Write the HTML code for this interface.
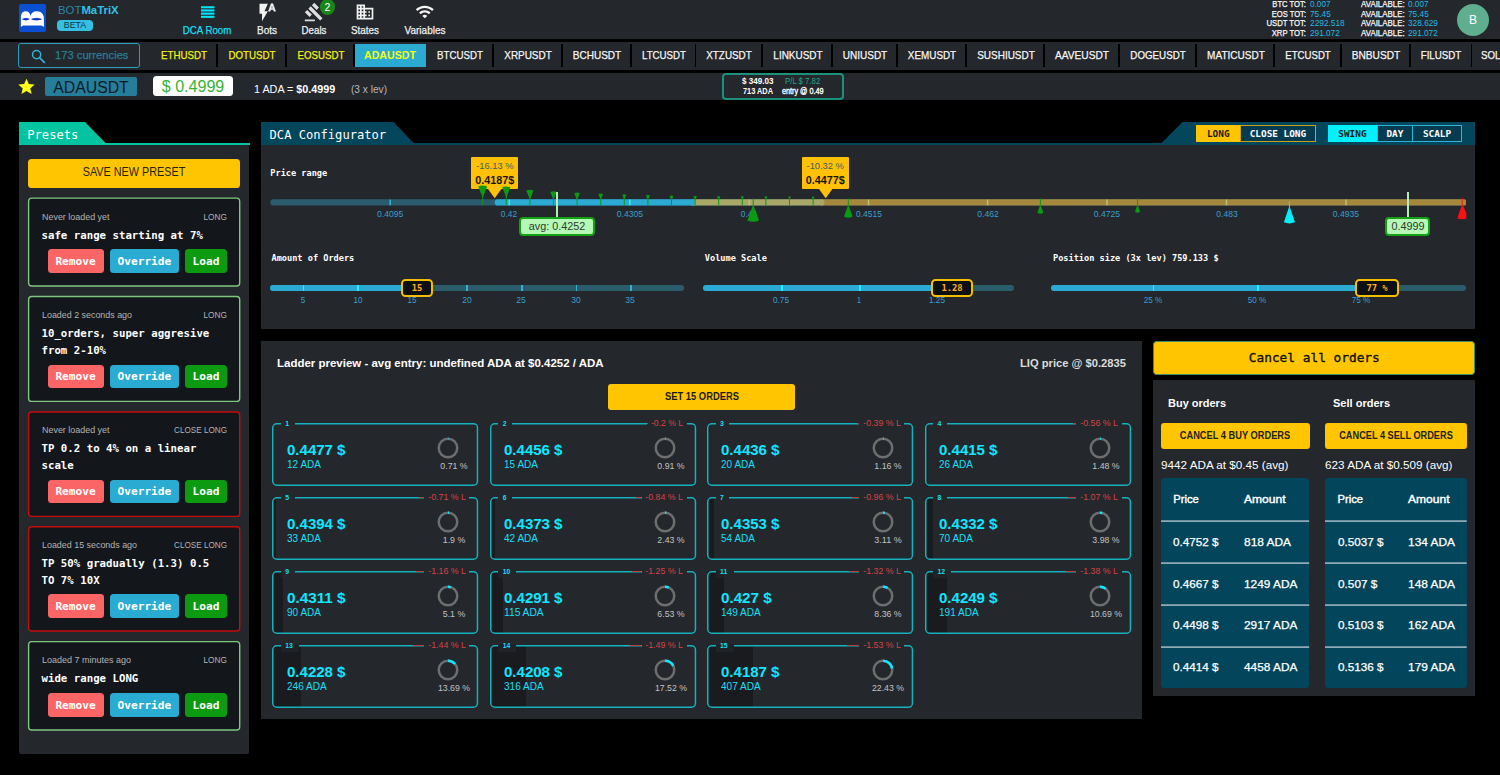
<!DOCTYPE html>
<html lang="en"><head><meta charset="utf-8"><title>BOTMaTriX - DCA Room</title>
<style>
html,body{margin:0;padding:0;background:#000;}
body{width:1500px;height:775px;overflow:hidden;position:relative;font-family:'Liberation Sans', sans-serif;}
.sec{position:absolute;left:0;top:0;width:0;height:0;}
.sec div,.a{position:absolute;}
.t{position:absolute;white-space:nowrap;display:block;}
svg{overflow:visible;}
</style></head>
<body>
<div class="sec" id="header">
<div style="left:0.00px;top:0.00px;width:1500.00px;height:38.80px;background:#24272c;"></div>
<div style="left:18.80px;top:4.10px;width:27.40px;height:27.80px;background:#0b50d0;border-radius:1.8px;"><svg viewBox="0 0 27.4 27.8" width="27.4" height="27.8" style="display:block"><path d="M1.900 23.100V13.200C1.900 9.300 4 7.200 6.700 7.200C9.400 7.200 11 9 11.500 11.800C12.100 9 14.500 7.200 17.800 7.200C22 7.200 24.900 10 24.900 14.200V23.100L22.500 21.500H4.200z" fill="#fff"/><path d="M3.600 15.200Q6.900 13.400 10.200 15.200Q6.900 16.900 3.600 15.200zM12.600 15.200Q17.400 13.300 22.300 15.200Q17.400 17 12.600 15.200z" fill="#0a34c4" stroke="#0a34c4" stroke-width="0.800"/></svg></div>
<span class="t" style="top:3.40px;font:normal 11.4px/14px 'Liberation Sans', sans-serif;color:#fff;left:57.60px;transform-origin:0 50%;transform:scaleX(0.998);"><span style="color:#2a87a3">BOT</span><b style="color:#2fc3e8">MaTriX</b></span>
<div style="left:57.00px;top:19.50px;width:35.50px;height:11.70px;background:#35bfe2;border-radius:4px;"></div>
<span class="t" style="top:19.70px;font:normal 9px/11px 'Liberation Sans', sans-serif;color:#0b3a4a;left:74.70px;margin-left:-150px;width:300px;text-align:center;transform-origin:50% 50%;transform:scaleX(0.985);">BETA</span>
<svg class="a" style="left:200.8px;top:5.8px" width="13.4" height="12.4" viewBox="0 0 13.4 12.4"><rect x="0" y="0.2" width="13.4" height="2.1" fill="#00e5ff"/><rect x="0" y="3.4" width="13.4" height="2.1" fill="#00e5ff"/><rect x="0" y="6.6" width="13.4" height="2.1" fill="#00e5ff"/><rect x="0" y="9.8" width="13.4" height="2.1" fill="#00e5ff"/></svg>
<span class="t" style="top:23.00px;font:normal 11.2px/14px 'Liberation Sans', sans-serif;color:#19dff5;left:207.30px;margin-left:-150px;width:300px;text-align:center;transform-origin:50% 50%;-webkit-text-stroke:0.25px currentColor;transform:scaleX(0.867);">DCA Room</span>
<svg class="a" style="left:257px;top:2px" width="20" height="20" viewBox="0 0 24 24" fill="#f1f1f1"><path d="M3 2v12h3v9l7-12H9l4-9H3z"/><path d="M19 2h-2l-3.200 9h1.900l.7-2h3.200l.7 2h1.900L19 2zm-2.150 5.650L18 4l1.150 3.650h-2.300z" stroke="#f1f1f1" stroke-width="0.700"/></svg>
<span class="t" style="top:23.00px;font:normal 11.2px/14px 'Liberation Sans', sans-serif;color:#f1f1f1;left:266.50px;margin-left:-150px;width:300px;text-align:center;transform-origin:50% 50%;-webkit-text-stroke:0.25px currentColor;transform:scaleX(0.893);">Bots</span>
<svg class="a" style="left:304.3px;top:1.7px" width="20" height="20" viewBox="0 0 24 24" fill="#dedede"><path d="M1 21h12v2H1zM5.245 8.070l2.830-2.827 14.140 14.142-2.828 2.828zM12.317 1l5.657 5.656-2.830 2.830-5.654-5.660zM3.825 9.485l5.657 5.657-2.828 2.828-5.657-5.657z"/></svg>
<div style="left:319.60px;top:-0.80px;width:15.60px;height:15.60px;background:#178717;border-radius:50%;"></div>
<span class="t" style="top:0.50px;font:normal 10.5px/13px 'Liberation Sans', sans-serif;color:#fff;left:327.50px;margin-left:-150px;width:300px;text-align:center;transform-origin:50% 50%;">2</span>
<span class="t" style="top:23.00px;font:normal 11.2px/14px 'Liberation Sans', sans-serif;color:#f1f1f1;left:314.00px;margin-left:-150px;width:300px;text-align:center;transform-origin:50% 50%;-webkit-text-stroke:0.25px currentColor;transform:scaleX(0.867);">Deals</span>
<svg class="a" style="left:355.2px;top:1.7px" width="20" height="20" viewBox="0 0 24 24" fill="#f1f1f1"><path d="M12 7V3H2v18h20V7H12zM6 19H4v-2h2v2zm0-4H4v-2h2v2zm0-4H4V9h2v2zm0-4H4V5h2v2zm4 12H8v-2h2v2zm0-4H8v-2h2v2zm0-4H8V9h2v2zm0-4H8V5h2v2zm10 12h-8v-2h2v-2h-2v-2h2v-2h-2V9h8v10zm-2-8h-2v2h2v-2zm0 4h-2v2h2v-2z"/></svg>
<span class="t" style="top:23.00px;font:normal 11.2px/14px 'Liberation Sans', sans-serif;color:#f1f1f1;left:365.40px;margin-left:-150px;width:300px;text-align:center;transform-origin:50% 50%;-webkit-text-stroke:0.25px currentColor;transform:scaleX(0.883);">States</span>
<svg class="a" style="left:415.2px;top:2.1px" width="19.6" height="19.6" viewBox="0 0 24 24" fill="#f4f4f4"><path d="M1 9l2 2c4.970-4.970 13.030-4.970 18 0l2-2C16.930 2.930 7.080 2.930 1 9zm8 8l3 3 3-3c-1.650-1.660-4.340-1.660-6 0zm-4-4l2 2c2.760-2.760 7.240-2.760 10 0l2-2C15.140 9.140 8.870 9.140 5 13z"/></svg>
<span class="t" style="top:23.00px;font:normal 11.2px/14px 'Liberation Sans', sans-serif;color:#f1f1f1;left:425.00px;margin-left:-150px;width:300px;text-align:center;transform-origin:50% 50%;-webkit-text-stroke:0.25px currentColor;transform:scaleX(0.895);">Variables</span>
<span class="t" style="top:-1.10px;font:normal 8.6px/11px 'Liberation Sans', sans-serif;color:#f8f8f8;left:1006.30px;width:300px;text-align:right;transform-origin:100% 50%;-webkit-text-stroke:0.25px currentColor;transform:scaleX(0.889);">BTC TOT:</span>
<span class="t" style="top:-1.10px;font:normal 8.6px/11px 'Liberation Sans', sans-serif;color:#21b8e6;left:1310.30px;transform-origin:0 50%;transform:scaleX(0.953);">0.007</span>
<span class="t" style="top:-1.10px;font:normal 8.6px/11px 'Liberation Sans', sans-serif;color:#f8f8f8;left:1360.50px;transform-origin:0 50%;-webkit-text-stroke:0.25px currentColor;transform:scaleX(0.921);">AVAILABLE:</span>
<span class="t" style="top:-1.10px;font:normal 8.6px/11px 'Liberation Sans', sans-serif;color:#21b8e6;left:1408.30px;transform-origin:0 50%;transform:scaleX(0.953);">0.007</span>
<span class="t" style="top:8.60px;font:normal 8.6px/11px 'Liberation Sans', sans-serif;color:#f8f8f8;left:1006.30px;width:300px;text-align:right;transform-origin:100% 50%;-webkit-text-stroke:0.25px currentColor;transform:scaleX(0.883);">EOS TOT:</span>
<span class="t" style="top:8.60px;font:normal 8.6px/11px 'Liberation Sans', sans-serif;color:#21b8e6;left:1310.30px;transform-origin:0 50%;transform:scaleX(0.967);">75.45</span>
<span class="t" style="top:8.60px;font:normal 8.6px/11px 'Liberation Sans', sans-serif;color:#f8f8f8;left:1360.50px;transform-origin:0 50%;-webkit-text-stroke:0.25px currentColor;transform:scaleX(0.921);">AVAILABLE:</span>
<span class="t" style="top:8.60px;font:normal 8.6px/11px 'Liberation Sans', sans-serif;color:#21b8e6;left:1408.30px;transform-origin:0 50%;transform:scaleX(0.967);">75.45</span>
<span class="t" style="top:17.85px;font:normal 8.6px/11px 'Liberation Sans', sans-serif;color:#f8f8f8;left:1006.30px;width:300px;text-align:right;transform-origin:100% 50%;-webkit-text-stroke:0.25px currentColor;transform:scaleX(0.901);">USDT TOT:</span>
<span class="t" style="top:17.85px;font:normal 8.6px/11px 'Liberation Sans', sans-serif;color:#21b8e6;left:1310.30px;transform-origin:0 50%;transform:scaleX(0.968);">2292.518</span>
<span class="t" style="top:17.85px;font:normal 8.6px/11px 'Liberation Sans', sans-serif;color:#f8f8f8;left:1360.50px;transform-origin:0 50%;-webkit-text-stroke:0.25px currentColor;transform:scaleX(0.921);">AVAILABLE:</span>
<span class="t" style="top:17.85px;font:normal 8.6px/11px 'Liberation Sans', sans-serif;color:#21b8e6;left:1408.30px;transform-origin:0 50%;transform:scaleX(0.965);">328.629</span>
<span class="t" style="top:27.50px;font:normal 8.6px/11px 'Liberation Sans', sans-serif;color:#f8f8f8;left:1006.30px;width:300px;text-align:right;transform-origin:100% 50%;-webkit-text-stroke:0.25px currentColor;transform:scaleX(0.897);">XRP TOT:</span>
<span class="t" style="top:27.50px;font:normal 8.6px/11px 'Liberation Sans', sans-serif;color:#21b8e6;left:1310.30px;transform-origin:0 50%;transform:scaleX(0.956);">291.072</span>
<span class="t" style="top:27.50px;font:normal 8.6px/11px 'Liberation Sans', sans-serif;color:#f8f8f8;left:1360.50px;transform-origin:0 50%;-webkit-text-stroke:0.25px currentColor;transform:scaleX(0.921);">AVAILABLE:</span>
<span class="t" style="top:27.50px;font:normal 8.6px/11px 'Liberation Sans', sans-serif;color:#21b8e6;left:1408.30px;transform-origin:0 50%;transform:scaleX(0.956);">291.072</span>
<div style="left:1457.20px;top:4.20px;width:32.00px;height:32.00px;background:#5fae8f;border-radius:50%;"></div>
<span class="t" style="top:12.30px;font:normal 13px/16px 'Liberation Sans', sans-serif;color:#fff;left:1473.30px;margin-left:-150px;width:300px;text-align:center;transform-origin:50% 50%;transform:scaleX(0.923);">B</span>
</div>
<div class="sec" id="ticker">
<div style="left:0.00px;top:41.80px;width:1500.00px;height:28.40px;background:#24272c;"></div>
<div style="left:18.30px;top:43.20px;width:121.30px;height:24.60px;border:1px solid #2b9cba;border-radius:3px;box-sizing:border-box;"></div>
<svg class="a" style="left:31px;top:48.5px" width="15" height="15" viewBox="0 0 15 15" fill="none" stroke="#2fb4d8" stroke-width="1.500"><circle cx="5.600" cy="5.600" r="4.100"/><path d="M8.600 8.600L13.800 13.800" stroke-width="1.700"/></svg>
<span class="t" style="top:47.90px;font:normal 11.2px/14px 'Liberation Sans', sans-serif;color:#2a7d96;left:55.30px;transform-origin:0 50%;-webkit-text-stroke:0.25px currentColor;transform:scaleX(1.001);">173 currencies</span>
<span class="t" style="top:48.20px;font:normal 11.2px/14px 'Liberation Sans', sans-serif;color:#f5f01e;left:184.00px;margin-left:-150px;width:300px;text-align:center;transform-origin:50% 50%;-webkit-text-stroke:0.25px currentColor;transform:scaleX(0.867);">ETHUSDT</span>
<span class="t" style="top:48.20px;font:normal 11.2px/14px 'Liberation Sans', sans-serif;color:#f5f01e;left:252.00px;margin-left:-150px;width:300px;text-align:center;transform-origin:50% 50%;-webkit-text-stroke:0.25px currentColor;transform:scaleX(0.869);">DOTUSDT</span>
<div style="left:216.10px;top:44.30px;width:1.80px;height:23.00px;background:#000;"></div>
<span class="t" style="top:48.20px;font:normal 11.2px/14px 'Liberation Sans', sans-serif;color:#f5f01e;left:320.65px;margin-left:-150px;width:300px;text-align:center;transform-origin:50% 50%;-webkit-text-stroke:0.25px currentColor;transform:scaleX(0.865);">EOSUSDT</span>
<div style="left:285.10px;top:44.30px;width:1.80px;height:23.00px;background:#000;"></div>
<div style="left:355.00px;top:44.30px;width:70.80px;height:22.80px;background:#2baad2;"></div>
<span class="t" style="top:48.20px;font:bold 11.2px/14px 'Liberation Sans', sans-serif;color:#f2ff1a;left:390.20px;margin-left:-150px;width:300px;text-align:center;transform-origin:50% 50%;transform:scaleX(0.951);">ADAUSDT</span>
<span class="t" style="top:48.20px;font:normal 11.2px/14px 'Liberation Sans', sans-serif;color:#f7f7f7;left:460.00px;margin-left:-150px;width:300px;text-align:center;transform-origin:50% 50%;-webkit-text-stroke:0.25px currentColor;transform:scaleX(0.867);">BTCUSDT</span>
<span class="t" style="top:48.20px;font:normal 11.2px/14px 'Liberation Sans', sans-serif;color:#f7f7f7;left:528.00px;margin-left:-150px;width:300px;text-align:center;transform-origin:50% 50%;-webkit-text-stroke:0.25px currentColor;transform:scaleX(0.888);">XRPUSDT</span>
<div style="left:492.10px;top:44.30px;width:1.80px;height:23.00px;background:#000;"></div>
<span class="t" style="top:48.20px;font:normal 11.2px/14px 'Liberation Sans', sans-serif;color:#f7f7f7;left:597.00px;margin-left:-150px;width:300px;text-align:center;transform-origin:50% 50%;-webkit-text-stroke:0.25px currentColor;transform:scaleX(0.897);">BCHUSDT</span>
<div style="left:561.10px;top:44.30px;width:1.80px;height:23.00px;background:#000;"></div>
<span class="t" style="top:48.20px;font:normal 11.2px/14px 'Liberation Sans', sans-serif;color:#f7f7f7;left:663.75px;margin-left:-150px;width:300px;text-align:center;transform-origin:50% 50%;-webkit-text-stroke:0.25px currentColor;transform:scaleX(0.867);">LTCUSDT</span>
<div style="left:630.10px;top:44.30px;width:1.80px;height:23.00px;background:#000;"></div>
<span class="t" style="top:48.20px;font:normal 11.2px/14px 'Liberation Sans', sans-serif;color:#f7f7f7;left:729.25px;margin-left:-150px;width:300px;text-align:center;transform-origin:50% 50%;-webkit-text-stroke:0.25px currentColor;transform:scaleX(0.882);">XTZUSDT</span>
<div style="left:694.60px;top:44.30px;width:1.80px;height:23.00px;background:#000;"></div>
<span class="t" style="top:48.20px;font:normal 11.2px/14px 'Liberation Sans', sans-serif;color:#f7f7f7;left:797.50px;margin-left:-150px;width:300px;text-align:center;transform-origin:50% 50%;-webkit-text-stroke:0.25px currentColor;transform:scaleX(0.891);">LINKUSDT</span>
<div style="left:761.10px;top:44.30px;width:1.80px;height:23.00px;background:#000;"></div>
<span class="t" style="top:48.20px;font:normal 11.2px/14px 'Liberation Sans', sans-serif;color:#f7f7f7;left:865.00px;margin-left:-150px;width:300px;text-align:center;transform-origin:50% 50%;-webkit-text-stroke:0.25px currentColor;transform:scaleX(0.895);">UNIUSDT</span>
<div style="left:831.10px;top:44.30px;width:1.80px;height:23.00px;background:#000;"></div>
<span class="t" style="top:48.20px;font:normal 11.2px/14px 'Liberation Sans', sans-serif;color:#f7f7f7;left:932.00px;margin-left:-150px;width:300px;text-align:center;transform-origin:50% 50%;-webkit-text-stroke:0.25px currentColor;transform:scaleX(0.883);">XEMUSDT</span>
<div style="left:896.10px;top:44.30px;width:1.80px;height:23.00px;background:#000;"></div>
<span class="t" style="top:48.20px;font:normal 11.2px/14px 'Liberation Sans', sans-serif;color:#f7f7f7;left:1005.60px;margin-left:-150px;width:300px;text-align:center;transform-origin:50% 50%;-webkit-text-stroke:0.25px currentColor;transform:scaleX(0.892);">SUSHIUSDT</span>
<div style="left:965.10px;top:44.30px;width:1.80px;height:23.00px;background:#000;"></div>
<span class="t" style="top:48.20px;font:normal 11.2px/14px 'Liberation Sans', sans-serif;color:#f7f7f7;left:1082.20px;margin-left:-150px;width:300px;text-align:center;transform-origin:50% 50%;-webkit-text-stroke:0.25px currentColor;transform:scaleX(0.908);">AAVEUSDT</span>
<div style="left:1043.30px;top:44.30px;width:1.80px;height:23.00px;background:#000;"></div>
<span class="t" style="top:48.20px;font:normal 11.2px/14px 'Liberation Sans', sans-serif;color:#f7f7f7;left:1158.00px;margin-left:-150px;width:300px;text-align:center;transform-origin:50% 50%;-webkit-text-stroke:0.25px currentColor;transform:scaleX(0.872);">DOGEUSDT</span>
<div style="left:1118.30px;top:44.30px;width:1.80px;height:23.00px;background:#000;"></div>
<span class="t" style="top:48.20px;font:normal 11.2px/14px 'Liberation Sans', sans-serif;color:#f7f7f7;left:1235.50px;margin-left:-150px;width:300px;text-align:center;transform-origin:50% 50%;-webkit-text-stroke:0.25px currentColor;transform:scaleX(0.897);">MATICUSDT</span>
<div style="left:1194.90px;top:44.30px;width:1.80px;height:23.00px;background:#000;"></div>
<span class="t" style="top:48.20px;font:normal 11.2px/14px 'Liberation Sans', sans-serif;color:#f7f7f7;left:1308.10px;margin-left:-150px;width:300px;text-align:center;transform-origin:50% 50%;-webkit-text-stroke:0.25px currentColor;transform:scaleX(0.861);">ETCUSDT</span>
<div style="left:1273.30px;top:44.30px;width:1.80px;height:23.00px;background:#000;"></div>
<span class="t" style="top:48.20px;font:normal 11.2px/14px 'Liberation Sans', sans-serif;color:#f7f7f7;left:1376.00px;margin-left:-150px;width:300px;text-align:center;transform-origin:50% 50%;-webkit-text-stroke:0.25px currentColor;transform:scaleX(0.907);">BNBUSDT</span>
<div style="left:1340.10px;top:44.30px;width:1.80px;height:23.00px;background:#000;"></div>
<span class="t" style="top:48.20px;font:normal 11.2px/14px 'Liberation Sans', sans-serif;color:#f7f7f7;left:1441.25px;margin-left:-150px;width:300px;text-align:center;transform-origin:50% 50%;-webkit-text-stroke:0.25px currentColor;transform:scaleX(0.871);">FILUSDT</span>
<div style="left:1409.10px;top:44.30px;width:1.80px;height:23.00px;background:#000;"></div>
<span class="t" style="top:48.20px;font:normal 11.2px/14px 'Liberation Sans', sans-serif;color:#f7f7f7;left:1481.30px;transform-origin:0 50%;-webkit-text-stroke:0.25px currentColor;transform:scaleX(0.870);">SOLUSDT</span>
<div style="left:1470.60px;top:44.30px;width:1.80px;height:23.00px;background:#000;"></div>
<div style="left:353.40px;top:44.30px;width:1.60px;height:23.00px;background:#000;"></div>
</div>
<div class="sec" id="coinbar">
<div style="left:0.00px;top:73.20px;width:1500.00px;height:26.90px;background:#24272c;"></div>
<svg class="a" style="left:18px;top:77.8px" width="17" height="16.500" viewBox="0 0 24 23"><path d="M12 0.800l3.300 7.600 8.200.7-6.200 5.400 1.900 8L12 18.300 4.800 22.500l1.900-8L.5 9.100l8.200-.7z" fill="#ffff1a"/></svg>
<div style="left:45.20px;top:76.90px;width:91.80px;height:19.30px;background:#267d99;border-radius:2px;"></div>
<span class="t" style="top:77.60px;font:normal 16px/20px 'Liberation Sans', sans-serif;color:#0c1c26;left:91.20px;margin-left:-150px;width:300px;text-align:center;transform-origin:50% 50%;transform:scaleX(0.988);">ADAUSDT</span>
<div style="left:153.00px;top:76.00px;width:80.00px;height:20.40px;background:#fff;border-radius:3.500px;"></div>
<span class="t" style="top:77.40px;font:normal 16px/20px 'Liberation Sans', sans-serif;color:#36b236;left:192.80px;margin-left:-150px;width:300px;text-align:center;transform-origin:50% 50%;transform:scaleX(1.004);">$ 0.4999</span>
<span class="t" style="top:82.20px;font:normal 11.2px/14px 'Liberation Sans', sans-serif;color:#fff;left:254.00px;transform-origin:0 50%;transform:scaleX(0.964);">1 ADA = <b>$0.4999</b></span>
<span class="t" style="top:82.20px;font:normal 11.2px/14px 'Liberation Sans', sans-serif;color:#b9b9b9;left:351.40px;transform-origin:0 50%;transform:scaleX(0.905);">(3 x lev)</span>
<div style="left:722.00px;top:73.30px;width:121.80px;height:26.40px;border:2px solid #1b917b;border-radius:4px;box-sizing:border-box;"></div>
<span class="t" style="top:76.20px;font:bold 8.3px/10px 'Liberation Sans', sans-serif;color:#fff;left:742.20px;transform-origin:0 50%;transform:scaleX(0.975);">$ 349.03</span>
<span class="t" style="top:76.20px;font:normal 8.3px/10px 'Liberation Sans', sans-serif;color:#22a88a;left:784.70px;transform-origin:0 50%;transform:scaleX(0.941);">P/L $ 7.82</span>
<span class="t" style="top:86.30px;font:bold 8.3px/10px 'Liberation Sans', sans-serif;color:#fff;left:743.00px;transform-origin:0 50%;transform:scaleX(0.887);">713 ADA</span>
<span class="t" style="top:86.30px;font:normal 8.3px/10px 'Liberation Sans', sans-serif;color:#fff;left:781.70px;transform-origin:0 50%;-webkit-text-stroke:0.35px #fff;transform:scaleX(0.873);">entry @ 0.49</span>
</div>
<div class="sec" id="presets">
<svg class="a" style="left:18.8px;top:122px" width="92" height="22" viewBox="0 0 92 22"><path d="M0 0H66L87.500 22H0z" fill="#03c3a1"/></svg>
<div style="left:18.80px;top:143.20px;width:230.80px;height:2.20px;background:#03c3a1;"></div>
<div style="left:18.80px;top:145.30px;width:230.60px;height:608.60px;background:#24272c;border-radius:0 0 2px 2px;"></div>
<span class="t" style="top:127.50px;font:normal 12.1px/15px 'DejaVu Sans Mono', 'Liberation Mono', monospace;color:#fff;left:27.30px;transform-origin:0 50%;">Presets</span>
<div style="left:28.00px;top:159.20px;width:212.30px;height:29.00px;background:#ffc600;border-radius:3.5px;"></div>
<span class="t" style="top:165.30px;font:normal 12.2px/15px 'Liberation Sans', sans-serif;color:#2a2208;left:134.00px;margin-left:-150px;width:300px;text-align:center;transform-origin:50% 50%;transform:scaleX(0.887);">SAVE NEW PRESET</span>
<svg class="a" style="left:0;top:0" width="260" height="775"><rect x="28.6" y="198.1" width="211.10" height="87.90" rx="3.2" fill="#13161a" stroke="#7fc77f" stroke-width="1.4"/></svg>
<span class="t" style="top:212.10px;font:normal 9px/11px 'Liberation Sans', sans-serif;color:#b4b4b4;left:41.70px;transform-origin:0 50%;transform:scaleX(0.992);">Never loaded yet</span>
<span class="t" style="top:212.10px;font:normal 9px/11px 'Liberation Sans', sans-serif;color:#b4b4b4;left:-73.50px;width:300px;text-align:right;transform-origin:100% 50%;transform:scaleX(0.921);">LONG</span>
<span class="t" style="top:229.10px;font:bold 10.72px/13px 'DejaVu Sans Mono', 'Liberation Mono', monospace;color:#fff;left:41.50px;transform-origin:0 50%;">safe range starting at 7%</span>
<div style="left:47.60px;top:249.10px;width:56.00px;height:23.80px;background:#fb6565;border-radius:3.5px;"></div>
<span class="t" style="top:254.50px;font:bold 11.2px/14px 'DejaVu Sans Mono', 'Liberation Mono', monospace;color:#fff;left:75.60px;margin-left:-150px;width:300px;text-align:center;transform-origin:50% 50%;">Remove</span>
<div style="left:109.80px;top:249.10px;width:69.20px;height:23.80px;background:#2aabd2;border-radius:3.5px;"></div>
<span class="t" style="top:254.50px;font:bold 11.2px/14px 'DejaVu Sans Mono', 'Liberation Mono', monospace;color:#fff;left:144.40px;margin-left:-150px;width:300px;text-align:center;transform-origin:50% 50%;">Override</span>
<div style="left:185.00px;top:249.10px;width:42.00px;height:23.80px;background:#0b9a10;border-radius:3.5px;"></div>
<span class="t" style="top:254.50px;font:bold 11.2px/14px 'DejaVu Sans Mono', 'Liberation Mono', monospace;color:#fff;left:206.00px;margin-left:-150px;width:300px;text-align:center;transform-origin:50% 50%;">Load</span>
<svg class="a" style="left:0;top:0" width="260" height="775"><rect x="28.6" y="296.5" width="211.10" height="104.90" rx="3.2" fill="#13161a" stroke="#7fc77f" stroke-width="1.4"/></svg>
<span class="t" style="top:310.10px;font:normal 9px/11px 'Liberation Sans', sans-serif;color:#b4b4b4;left:41.70px;transform-origin:0 50%;transform:scaleX(0.988);">Loaded 2 seconds ago</span>
<span class="t" style="top:310.10px;font:normal 9px/11px 'Liberation Sans', sans-serif;color:#b4b4b4;left:-73.50px;width:300px;text-align:right;transform-origin:100% 50%;transform:scaleX(0.921);">LONG</span>
<span class="t" style="top:327.10px;font:bold 10.72px/13px 'DejaVu Sans Mono', 'Liberation Mono', monospace;color:#fff;left:41.50px;transform-origin:0 50%;">10_orders, super aggresive</span>
<span class="t" style="top:343.50px;font:bold 10.72px/13px 'DejaVu Sans Mono', 'Liberation Mono', monospace;color:#fff;left:41.50px;transform-origin:0 50%;">from 2-10%</span>
<div style="left:47.60px;top:364.50px;width:56.00px;height:23.80px;background:#fb6565;border-radius:3.5px;"></div>
<span class="t" style="top:369.90px;font:bold 11.2px/14px 'DejaVu Sans Mono', 'Liberation Mono', monospace;color:#fff;left:75.60px;margin-left:-150px;width:300px;text-align:center;transform-origin:50% 50%;">Remove</span>
<div style="left:109.80px;top:364.50px;width:69.20px;height:23.80px;background:#2aabd2;border-radius:3.5px;"></div>
<span class="t" style="top:369.90px;font:bold 11.2px/14px 'DejaVu Sans Mono', 'Liberation Mono', monospace;color:#fff;left:144.40px;margin-left:-150px;width:300px;text-align:center;transform-origin:50% 50%;">Override</span>
<div style="left:185.00px;top:364.50px;width:42.00px;height:23.80px;background:#0b9a10;border-radius:3.5px;"></div>
<span class="t" style="top:369.90px;font:bold 11.2px/14px 'DejaVu Sans Mono', 'Liberation Mono', monospace;color:#fff;left:206.00px;margin-left:-150px;width:300px;text-align:center;transform-origin:50% 50%;">Load</span>
<svg class="a" style="left:0;top:0" width="260" height="775"><rect x="28.6" y="412.0" width="211.10" height="104.40" rx="3.2" fill="#13161a" stroke="#c40d0d" stroke-width="1.4"/></svg>
<span class="t" style="top:425.10px;font:normal 9px/11px 'Liberation Sans', sans-serif;color:#b4b4b4;left:41.70px;transform-origin:0 50%;transform:scaleX(0.992);">Never loaded yet</span>
<span class="t" style="top:425.10px;font:normal 9px/11px 'Liberation Sans', sans-serif;color:#b4b4b4;left:-73.50px;width:300px;text-align:right;transform-origin:100% 50%;transform:scaleX(0.905);">CLOSE LONG</span>
<span class="t" style="top:442.10px;font:bold 10.72px/13px 'DejaVu Sans Mono', 'Liberation Mono', monospace;color:#fff;left:41.50px;transform-origin:0 50%;">TP 0.2 to 4% on a linear</span>
<span class="t" style="top:458.50px;font:bold 10.72px/13px 'DejaVu Sans Mono', 'Liberation Mono', monospace;color:#fff;left:41.50px;transform-origin:0 50%;">scale</span>
<div style="left:47.60px;top:479.50px;width:56.00px;height:23.80px;background:#fb6565;border-radius:3.5px;"></div>
<span class="t" style="top:484.90px;font:bold 11.2px/14px 'DejaVu Sans Mono', 'Liberation Mono', monospace;color:#fff;left:75.60px;margin-left:-150px;width:300px;text-align:center;transform-origin:50% 50%;">Remove</span>
<div style="left:109.80px;top:479.50px;width:69.20px;height:23.80px;background:#2aabd2;border-radius:3.5px;"></div>
<span class="t" style="top:484.90px;font:bold 11.2px/14px 'DejaVu Sans Mono', 'Liberation Mono', monospace;color:#fff;left:144.40px;margin-left:-150px;width:300px;text-align:center;transform-origin:50% 50%;">Override</span>
<div style="left:185.00px;top:479.50px;width:42.00px;height:23.80px;background:#0b9a10;border-radius:3.5px;"></div>
<span class="t" style="top:484.90px;font:bold 11.2px/14px 'DejaVu Sans Mono', 'Liberation Mono', monospace;color:#fff;left:206.00px;margin-left:-150px;width:300px;text-align:center;transform-origin:50% 50%;">Load</span>
<svg class="a" style="left:0;top:0" width="260" height="775"><rect x="28.6" y="526.7" width="211.10" height="104.35" rx="3.2" fill="#13161a" stroke="#c40d0d" stroke-width="1.4"/></svg>
<span class="t" style="top:540.30px;font:normal 9px/11px 'Liberation Sans', sans-serif;color:#b4b4b4;left:41.70px;transform-origin:0 50%;transform:scaleX(0.989);">Loaded 15 seconds ago</span>
<span class="t" style="top:540.30px;font:normal 9px/11px 'Liberation Sans', sans-serif;color:#b4b4b4;left:-73.50px;width:300px;text-align:right;transform-origin:100% 50%;transform:scaleX(0.905);">CLOSE LONG</span>
<span class="t" style="top:557.30px;font:bold 10.72px/13px 'DejaVu Sans Mono', 'Liberation Mono', monospace;color:#fff;left:41.50px;transform-origin:0 50%;">TP 50% gradually (1.3) 0.5</span>
<span class="t" style="top:573.70px;font:bold 10.72px/13px 'DejaVu Sans Mono', 'Liberation Mono', monospace;color:#fff;left:41.50px;transform-origin:0 50%;">TO 7% 10X</span>
<div style="left:47.60px;top:594.15px;width:56.00px;height:23.80px;background:#fb6565;border-radius:3.5px;"></div>
<span class="t" style="top:599.55px;font:bold 11.2px/14px 'DejaVu Sans Mono', 'Liberation Mono', monospace;color:#fff;left:75.60px;margin-left:-150px;width:300px;text-align:center;transform-origin:50% 50%;">Remove</span>
<div style="left:109.80px;top:594.15px;width:69.20px;height:23.80px;background:#2aabd2;border-radius:3.5px;"></div>
<span class="t" style="top:599.55px;font:bold 11.2px/14px 'DejaVu Sans Mono', 'Liberation Mono', monospace;color:#fff;left:144.40px;margin-left:-150px;width:300px;text-align:center;transform-origin:50% 50%;">Override</span>
<div style="left:185.00px;top:594.15px;width:42.00px;height:23.80px;background:#0b9a10;border-radius:3.5px;"></div>
<span class="t" style="top:599.55px;font:bold 11.2px/14px 'DejaVu Sans Mono', 'Liberation Mono', monospace;color:#fff;left:206.00px;margin-left:-150px;width:300px;text-align:center;transform-origin:50% 50%;">Load</span>
<svg class="a" style="left:0;top:0" width="260" height="775"><rect x="28.6" y="641.6" width="211.10" height="88.40" rx="3.2" fill="#13161a" stroke="#7fc77f" stroke-width="1.4"/></svg>
<span class="t" style="top:655.10px;font:normal 9px/11px 'Liberation Sans', sans-serif;color:#b4b4b4;left:41.70px;transform-origin:0 50%;transform:scaleX(0.999);">Loaded 7 minutes ago</span>
<span class="t" style="top:655.10px;font:normal 9px/11px 'Liberation Sans', sans-serif;color:#b4b4b4;left:-73.50px;width:300px;text-align:right;transform-origin:100% 50%;transform:scaleX(0.921);">LONG</span>
<span class="t" style="top:672.10px;font:bold 10.72px/13px 'DejaVu Sans Mono', 'Liberation Mono', monospace;color:#fff;left:41.50px;transform-origin:0 50%;">wide range LONG</span>
<div style="left:47.60px;top:693.10px;width:56.00px;height:23.80px;background:#fb6565;border-radius:3.5px;"></div>
<span class="t" style="top:698.50px;font:bold 11.2px/14px 'DejaVu Sans Mono', 'Liberation Mono', monospace;color:#fff;left:75.60px;margin-left:-150px;width:300px;text-align:center;transform-origin:50% 50%;">Remove</span>
<div style="left:109.80px;top:693.10px;width:69.20px;height:23.80px;background:#2aabd2;border-radius:3.5px;"></div>
<span class="t" style="top:698.50px;font:bold 11.2px/14px 'DejaVu Sans Mono', 'Liberation Mono', monospace;color:#fff;left:144.40px;margin-left:-150px;width:300px;text-align:center;transform-origin:50% 50%;">Override</span>
<div style="left:185.00px;top:693.10px;width:42.00px;height:23.80px;background:#0b9a10;border-radius:3.5px;"></div>
<span class="t" style="top:698.50px;font:bold 11.2px/14px 'DejaVu Sans Mono', 'Liberation Mono', monospace;color:#fff;left:206.00px;margin-left:-150px;width:300px;text-align:center;transform-origin:50% 50%;">Load</span>
</div>
<div class="sec" id="configurator">
<svg class="a" style="left:261.2px;top:122.4px" width="160" height="21.5" viewBox="0 0 160 21.5"><path d="M0 0H132.500L153 21.500H0z" fill="#04465c"/></svg>
<svg class="a" style="left:1160px;top:122.4px" width="315" height="21.5" viewBox="0 0 315 21.5"><path d="M22.500 0H315V21.500H1z" fill="#04465c"/></svg>
<div style="left:261.20px;top:143.20px;width:1213.80px;height:2.00px;background:#04465c;"></div>
<div style="left:261.20px;top:145.10px;width:1213.80px;height:183.60px;background:#24272c;"></div>
<span class="t" style="top:127.60px;font:normal 12.1px/15px 'DejaVu Sans Mono', 'Liberation Mono', monospace;color:#fff;left:269.60px;transform-origin:0 50%;">DCA Configurator</span>
<div style="left:1196.30px;top:125.20px;width:43.90px;height:16.90px;background:#ffc400;"></div><span class="t" style="top:128.20px;font:bold 9.4px/12px 'DejaVu Sans Mono', 'Liberation Mono', monospace;color:#1a1a1a;left:1218.25px;margin-left:-150px;width:300px;text-align:center;transform-origin:50% 50%;">LONG</span>
<div style="left:1240.20px;top:125.20px;width:75.50px;height:16.90px;background:#073c50;border:1px solid #c9a21a;box-sizing:border-box;"></div><span class="t" style="top:128.20px;font:bold 9.4px/12px 'DejaVu Sans Mono', 'Liberation Mono', monospace;color:#fff;left:1277.95px;margin-left:-150px;width:300px;text-align:center;transform-origin:50% 50%;">CLOSE LONG</span>
<div style="left:1327.90px;top:125.20px;width:49.10px;height:16.90px;background:#00f0ff;"></div><span class="t" style="top:128.20px;font:bold 9.4px/12px 'DejaVu Sans Mono', 'Liberation Mono', monospace;color:#1a1a1a;left:1352.45px;margin-left:-150px;width:300px;text-align:center;transform-origin:50% 50%;">SWING</span>
<div style="left:1376.50px;top:125.20px;width:36.70px;height:16.90px;background:#073c50;border:1px solid #2fb4d8;box-sizing:border-box;"></div><span class="t" style="top:128.20px;font:bold 9.4px/12px 'DejaVu Sans Mono', 'Liberation Mono', monospace;color:#fff;left:1394.85px;margin-left:-150px;width:300px;text-align:center;transform-origin:50% 50%;">DAY</span>
<div style="left:1412.20px;top:125.20px;width:49.60px;height:16.90px;background:#073c50;border:1px solid #2fb4d8;box-sizing:border-box;"></div><span class="t" style="top:128.20px;font:bold 9.4px/12px 'DejaVu Sans Mono', 'Liberation Mono', monospace;color:#fff;left:1437.00px;margin-left:-150px;width:300px;text-align:center;transform-origin:50% 50%;">SCALP</span>
<span class="t" style="top:168.30px;font:bold 8.6px/11px 'DejaVu Sans Mono', 'Liberation Mono', monospace;color:#fff;left:270.30px;transform-origin:0 50%;">Price range</span>
<svg class="a" style="left:0;top:0" width="1500" height="260"><rect x="270.3" y="199.3" width="1195.700" height="6.2" rx="3.1" fill="#2b5c6c"/><rect x="820" y="199.3" width="646" height="6.2" rx="1.5" fill="#a6883c"/><rect x="690" y="199.3" width="134.500" height="6.2" rx="3.1" fill="#aaa868"/><path d="M497.800 199.3H694.700V205.5H497.800A3.100 3.100 0 0 1 497.800 199.3z" fill="#2baad2"/></svg>
<svg class="a" style="left:0;top:0" width="1500" height="260"><rect x="389.45" y="199.60" width="1.5" height="5.60" fill="#36b8da"/></svg>
<span class="t" style="top:209.20px;font:normal 8.6px/11px 'Liberation Sans', sans-serif;color:#3a9fd0;left:390.20px;margin-left:-150px;width:300px;text-align:center;transform-origin:50% 50%;transform:scaleX(1.000);">0.4095</span>
<svg class="a" style="left:0;top:0" width="1500" height="260"><rect x="508.55" y="199.60" width="1.5" height="5.60" fill="#38ecff"/></svg>
<span class="t" style="top:209.20px;font:normal 8.6px/11px 'Liberation Sans', sans-serif;color:#3a9fd0;left:509.30px;margin-left:-150px;width:300px;text-align:center;transform-origin:50% 50%;transform:scaleX(0.974);">0.42</span>
<svg class="a" style="left:0;top:0" width="1500" height="260"><rect x="629.15" y="199.60" width="1.5" height="5.60" fill="#38ecff"/></svg>
<span class="t" style="top:209.20px;font:normal 8.6px/11px 'Liberation Sans', sans-serif;color:#3a9fd0;left:629.90px;margin-left:-150px;width:300px;text-align:center;transform-origin:50% 50%;transform:scaleX(1.000);">0.4305</span>
<svg class="a" style="left:0;top:0" width="1500" height="260"><rect x="748.55" y="199.60" width="1.5" height="5.60" fill="#bdbf7c"/></svg>
<span class="t" style="top:209.20px;font:normal 8.6px/11px 'Liberation Sans', sans-serif;color:#3a9fd0;left:749.30px;margin-left:-150px;width:300px;text-align:center;transform-origin:50% 50%;transform:scaleX(0.974);">0.44</span>
<svg class="a" style="left:0;top:0" width="1500" height="260"><rect x="867.75" y="199.60" width="1.5" height="5.60" fill="#bdbf7c"/></svg>
<span class="t" style="top:209.20px;font:normal 8.6px/11px 'Liberation Sans', sans-serif;color:#3a9fd0;left:868.50px;margin-left:-150px;width:300px;text-align:center;transform-origin:50% 50%;transform:scaleX(0.981);">0.4515</span>
<svg class="a" style="left:0;top:0" width="1500" height="260"><rect x="986.85" y="199.60" width="1.5" height="5.60" fill="#bdbf7c"/></svg>
<span class="t" style="top:209.20px;font:normal 8.6px/11px 'Liberation Sans', sans-serif;color:#3a9fd0;left:987.60px;margin-left:-150px;width:300px;text-align:center;transform-origin:50% 50%;transform:scaleX(0.990);">0.462</span>
<svg class="a" style="left:0;top:0" width="1500" height="260"><rect x="1106.25" y="199.60" width="1.5" height="5.60" fill="#bdbf7c"/></svg>
<span class="t" style="top:209.20px;font:normal 8.6px/11px 'Liberation Sans', sans-serif;color:#3a9fd0;left:1107.00px;margin-left:-150px;width:300px;text-align:center;transform-origin:50% 50%;transform:scaleX(1.000);">0.4725</span>
<svg class="a" style="left:0;top:0" width="1500" height="260"><rect x="1225.75" y="199.60" width="1.5" height="5.60" fill="#bdbf7c"/></svg>
<span class="t" style="top:209.20px;font:normal 8.6px/11px 'Liberation Sans', sans-serif;color:#3a9fd0;left:1226.50px;margin-left:-150px;width:300px;text-align:center;transform-origin:50% 50%;transform:scaleX(0.990);">0.483</span>
<svg class="a" style="left:0;top:0" width="1500" height="260"><rect x="1345.25" y="199.60" width="1.5" height="5.60" fill="#bdbf7c"/></svg>
<span class="t" style="top:209.20px;font:normal 8.6px/11px 'Liberation Sans', sans-serif;color:#3a9fd0;left:1346.00px;margin-left:-150px;width:300px;text-align:center;transform-origin:50% 50%;transform:scaleX(1.000);">0.4935</span>
<div style="left:471.20px;top:157.40px;width:47.20px;height:31.60px;background:#ffc107;border-radius:1px;"></div><svg class="a" style="left:488.10px;top:189.3px" width="13.4" height="9.5" viewBox="0 0 13.4 9.5"><path d="M0 0H13.400L6.700 9.200z" fill="#ffc107"/></svg><span class="t" style="top:159.70px;font:normal 9.3px/12px 'Liberation Sans', sans-serif;color:#3f6068;left:494.80px;margin-left:-150px;width:300px;text-align:center;transform-origin:50% 50%;">-16.13 %</span><span class="t" style="top:172.80px;font:bold 10.8px/14px 'Liberation Sans', sans-serif;color:#1c1400;left:494.80px;margin-left:-150px;width:300px;text-align:center;transform-origin:50% 50%;">0.4187$</span>
<div style="left:801.60px;top:157.40px;width:47.20px;height:31.60px;background:#ffc107;border-radius:1px;"></div><svg class="a" style="left:818.50px;top:189.3px" width="13.4" height="9.5" viewBox="0 0 13.4 9.5"><path d="M0 0H13.400L6.700 9.200z" fill="#ffc107"/></svg><span class="t" style="top:159.70px;font:normal 9.3px/12px 'Liberation Sans', sans-serif;color:#3f6068;left:825.20px;margin-left:-150px;width:300px;text-align:center;transform-origin:50% 50%;">-10.32 %</span><span class="t" style="top:172.80px;font:bold 10.8px/14px 'Liberation Sans', sans-serif;color:#1c1400;left:825.20px;margin-left:-150px;width:300px;text-align:center;transform-origin:50% 50%;">0.4477$</span>
<svg class="a" style="left:261px;top:150px" width="1214" height="100" viewBox="261 150 1214 100"><path d="M478.20 186.50Q482.70 184.52 487.20 186.50L482.70 197.75z" fill="#0a9a14"/><rect x="482.20" y="186.50" width="1" height="18.80" fill="#0a9a14"/><path d="M502.23 187.30Q506.30 185.51 510.38 187.30L506.30 197.49z" fill="#0a9a14"/><rect x="505.80" y="187.30" width="1" height="18.00" fill="#0a9a14"/><path d="M526.25 190.50Q529.90 188.89 533.55 190.50L529.90 199.62z" fill="#0a9a14"/><rect x="529.40" y="190.50" width="1" height="14.80" fill="#0a9a14"/><path d="M550.27 192.00Q553.50 190.58 556.73 192.00L553.50 200.06z" fill="#0a9a14"/><rect x="553.00" y="192.00" width="1" height="13.30" fill="#0a9a14"/><path d="M574.30 193.20Q577.10 191.97 579.90 193.20L577.10 200.20z" fill="#0a9a14"/><rect x="576.60" y="193.20" width="1" height="12.10" fill="#0a9a14"/><path d="M598.33 194.00Q600.70 192.96 603.08 194.00L600.70 199.94z" fill="#0a9a14"/><rect x="600.20" y="194.00" width="1" height="11.30" fill="#0a9a14"/><path d="M622.20 194.80Q624.30 193.88 626.40 194.80L624.30 200.05z" fill="#0a9a14"/><rect x="623.80" y="194.80" width="1" height="10.50" fill="#0a9a14"/><path d="M645.90 195.40Q647.90 194.52 649.90 195.40L647.90 200.40z" fill="#0a9a14"/><rect x="647.40" y="195.40" width="1" height="9.90" fill="#0a9a14"/><path d="M669.60 195.90Q671.50 195.06 673.40 195.90L671.50 200.65z" fill="#0a9a14"/><rect x="671.00" y="195.90" width="1" height="9.40" fill="#0a9a14"/><path d="M693.30 196.30Q695.10 195.51 696.90 196.30L695.10 200.80z" fill="#0a9a14"/><rect x="694.60" y="196.30" width="1" height="9.00" fill="#0a9a14"/><path d="M717.00 196.50Q718.70 195.75 720.40 196.50L718.70 200.75z" fill="#0a9a14"/><rect x="718.20" y="196.50" width="1" height="8.80" fill="#0a9a14"/><path d="M740.70 196.60Q742.30 195.90 743.90 196.60L742.30 200.60z" fill="#0a9a14"/><rect x="741.80" y="196.60" width="1" height="8.70" fill="#0a9a14"/><path d="M764.40 196.70Q765.90 196.04 767.40 196.70L765.90 200.45z" fill="#0a9a14"/><rect x="765.40" y="196.70" width="1" height="8.60" fill="#0a9a14"/><path d="M788.10 196.80Q789.50 196.18 790.90 196.80L789.50 200.30z" fill="#0a9a14"/><rect x="789.00" y="196.80" width="1" height="8.50" fill="#0a9a14"/><path d="M811.80 196.90Q813.10 196.33 814.40 196.90L813.10 200.15z" fill="#0a9a14"/><rect x="812.60" y="196.90" width="1" height="8.40" fill="#0a9a14"/><path d="M753.20 204.500L759.05 220.50Q753.20 223.00 747.35 220.50z" fill="#0a9a14"/><rect x="752.70" y="198.500" width="1" height="8" fill="#0a9a14"/><path d="M848.30 204.500L852.55 216.50Q848.30 219.00 844.05 216.50z" fill="#0a9a14"/><rect x="847.80" y="198.500" width="1" height="8" fill="#0a9a14"/><path d="M1040.40 204.500L1043.40 212.50Q1040.40 215.00 1037.40 212.50z" fill="#0a9a14"/><rect x="1039.90" y="198.500" width="1" height="8" fill="#0a9a14"/><path d="M1137.60 204.500L1140.20 211.50Q1137.60 214.00 1135.00 211.50z" fill="#0a9a14"/><rect x="1137.10" y="198.500" width="1" height="8" fill="#0a9a14"/><path d="M1289.400 206L1294.900 222.300Q1289.400 224.600 1283.900 222.300z" fill="#00f0ff"/><rect x="1288.900" y="201.400" width="1" height="6" fill="#00f0ff"/><path d="M1462.200 204L1466.300 213V218.500Q1462 220 1457.300 218.500z" fill="#ff1010"/><rect x="1461.700" y="197.800" width="1" height="8" fill="#ff1010"/></svg>
<div style="left:556.00px;top:192.10px;width:2.00px;height:25.50px;background:#b4eeb4;"></div><div style="left:519.00px;top:217.20px;width:76.00px;height:18.40px;background:#b6f8b6;border:2px solid #14a014;border-radius:4px;box-sizing:border-box;"></div><span class="t" style="top:219.00px;font:normal 10.8px/14px 'Liberation Sans', sans-serif;color:#2c3a2c;left:557.05px;margin-left:-150px;width:300px;text-align:center;transform-origin:50% 50%;">avg: 0.4252</span>
<div style="left:1407.00px;top:192.10px;width:2.00px;height:25.50px;background:#b4eeb4;"></div><div style="left:1385.20px;top:217.20px;width:45.30px;height:18.40px;background:#b6f8b6;border:2px solid #14a014;border-radius:4px;box-sizing:border-box;"></div><span class="t" style="top:219.00px;font:normal 10.8px/14px 'Liberation Sans', sans-serif;color:#2c3a2c;left:1407.90px;margin-left:-150px;width:300px;text-align:center;transform-origin:50% 50%;">0.4999</span>
<span class="t" style="top:253.10px;font:bold 8.6px/11px 'DejaVu Sans Mono', 'Liberation Mono', monospace;color:#fff;left:271.50px;transform-origin:0 50%;">Amount of Orders</span>
<div style="left:270.30px;top:284.80px;width:413.70px;height:6.30px;background:#2b5c6c;border-radius:3.2px;"></div><div style="left:270.30px;top:284.80px;width:146.35px;height:6.30px;background:#2baad2;border-radius:3.2px 0 0 3.2px;"></div><div style="left:302.70px;top:285.10px;width:1.80px;height:5.70px;background:#22eaff;"></div><span class="t" style="top:294.80px;font:normal 8.6px/11px 'Liberation Sans', sans-serif;color:#3a9fd0;left:302.90px;margin-left:-150px;width:300px;text-align:center;transform-origin:50% 50%;transform:scaleX(0.941);">5</span><div style="left:357.30px;top:285.10px;width:1.80px;height:5.70px;background:#22eaff;"></div><span class="t" style="top:294.80px;font:normal 8.6px/11px 'Liberation Sans', sans-serif;color:#3a9fd0;left:357.50px;margin-left:-150px;width:300px;text-align:center;transform-origin:50% 50%;transform:scaleX(0.941);">10</span><div style="left:411.90px;top:285.10px;width:1.80px;height:5.70px;background:#35b0d2;"></div><span class="t" style="top:294.80px;font:normal 8.6px/11px 'Liberation Sans', sans-serif;color:#3a9fd0;left:412.10px;margin-left:-150px;width:300px;text-align:center;transform-origin:50% 50%;transform:scaleX(0.941);">15</span><div style="left:466.40px;top:285.10px;width:1.80px;height:5.70px;background:#35b0d2;"></div><span class="t" style="top:294.80px;font:normal 8.6px/11px 'Liberation Sans', sans-serif;color:#3a9fd0;left:466.60px;margin-left:-150px;width:300px;text-align:center;transform-origin:50% 50%;transform:scaleX(0.993);">20</span><div style="left:521.00px;top:285.10px;width:1.80px;height:5.70px;background:#35b0d2;"></div><span class="t" style="top:294.80px;font:normal 8.6px/11px 'Liberation Sans', sans-serif;color:#3a9fd0;left:521.20px;margin-left:-150px;width:300px;text-align:center;transform-origin:50% 50%;transform:scaleX(0.993);">25</span><div style="left:575.60px;top:285.10px;width:1.80px;height:5.70px;background:#35b0d2;"></div><span class="t" style="top:294.80px;font:normal 8.6px/11px 'Liberation Sans', sans-serif;color:#3a9fd0;left:575.80px;margin-left:-150px;width:300px;text-align:center;transform-origin:50% 50%;transform:scaleX(0.993);">30</span><div style="left:630.20px;top:285.10px;width:1.80px;height:5.70px;background:#35b0d2;"></div><span class="t" style="top:294.80px;font:normal 8.6px/11px 'Liberation Sans', sans-serif;color:#3a9fd0;left:630.40px;margin-left:-150px;width:300px;text-align:center;transform-origin:50% 50%;transform:scaleX(0.993);">35</span><div style="left:400.70px;top:278.80px;width:32.50px;height:18.50px;background:#0c1013;border:2px solid #f5bd00;border-radius:4.5px;box-sizing:border-box;"></div><span class="t" style="top:282.80px;font:bold 8.8px/11px 'DejaVu Sans Mono', 'Liberation Mono', monospace;color:#ffab1f;left:416.95px;margin-left:-150px;width:300px;text-align:center;transform-origin:50% 50%;">15</span>
<span class="t" style="top:253.10px;font:bold 8.6px/11px 'DejaVu Sans Mono', 'Liberation Mono', monospace;color:#fff;left:704.80px;transform-origin:0 50%;">Volume Scale</span>
<div style="left:702.70px;top:284.80px;width:311.50px;height:6.30px;background:#2b5c6c;border-radius:3.2px;"></div><div style="left:702.70px;top:284.80px;width:249.05px;height:6.30px;background:#2baad2;border-radius:3.2px 0 0 3.2px;"></div><div style="left:781.00px;top:285.10px;width:1.80px;height:5.70px;background:#22eaff;"></div><span class="t" style="top:294.80px;font:normal 8.6px/11px 'Liberation Sans', sans-serif;color:#3a9fd0;left:781.20px;margin-left:-150px;width:300px;text-align:center;transform-origin:50% 50%;transform:scaleX(0.956);">0.75</span><div style="left:858.80px;top:285.10px;width:1.80px;height:5.70px;background:#22eaff;"></div><span class="t" style="top:294.80px;font:normal 8.6px/11px 'Liberation Sans', sans-serif;color:#3a9fd0;left:859.00px;margin-left:-150px;width:300px;text-align:center;transform-origin:50% 50%;transform:scaleX(0.837);">1</span><div style="left:936.70px;top:285.10px;width:1.80px;height:5.70px;background:#35b0d2;"></div><span class="t" style="top:294.80px;font:normal 8.6px/11px 'Liberation Sans', sans-serif;color:#3a9fd0;left:936.90px;margin-left:-150px;width:300px;text-align:center;transform-origin:50% 50%;transform:scaleX(0.956);">1.25</span><div style="left:931.30px;top:278.80px;width:41.50px;height:18.50px;background:#0c1013;border:2px solid #f5bd00;border-radius:4.5px;box-sizing:border-box;"></div><span class="t" style="top:282.80px;font:bold 8.8px/11px 'DejaVu Sans Mono', 'Liberation Mono', monospace;color:#ffab1f;left:952.05px;margin-left:-150px;width:300px;text-align:center;transform-origin:50% 50%;">1.28</span>
<span class="t" style="top:253.10px;font:bold 8.6px/11px 'DejaVu Sans Mono', 'Liberation Mono', monospace;color:#fff;left:1053.00px;transform-origin:0 50%;">Position size (3x lev) 759.133 $</span>
<div style="left:1051.40px;top:284.80px;width:414.60px;height:6.30px;background:#2b5c6c;border-radius:3.2px;"></div><div style="left:1051.40px;top:284.80px;width:325.30px;height:6.30px;background:#2baad2;border-radius:3.2px 0 0 3.2px;"></div><div style="left:1152.50px;top:285.10px;width:1.80px;height:5.70px;background:#22eaff;"></div><span class="t" style="top:294.80px;font:normal 8.6px/11px 'Liberation Sans', sans-serif;color:#3a9fd0;left:1152.70px;margin-left:-150px;width:300px;text-align:center;transform-origin:50% 50%;transform:scaleX(0.944);">25 %</span><div style="left:1257.10px;top:285.10px;width:1.80px;height:5.70px;background:#22eaff;"></div><span class="t" style="top:294.80px;font:normal 8.6px/11px 'Liberation Sans', sans-serif;color:#3a9fd0;left:1257.30px;margin-left:-150px;width:300px;text-align:center;transform-origin:50% 50%;transform:scaleX(0.944);">50 %</span><div style="left:1361.20px;top:285.10px;width:1.80px;height:5.70px;background:#35b0d2;"></div><span class="t" style="top:294.80px;font:normal 8.6px/11px 'Liberation Sans', sans-serif;color:#3a9fd0;left:1361.40px;margin-left:-150px;width:300px;text-align:center;transform-origin:50% 50%;transform:scaleX(0.944);">75 %</span><div style="left:1355.40px;top:278.80px;width:43.20px;height:18.50px;background:#0c1013;border:2px solid #f5bd00;border-radius:4.5px;box-sizing:border-box;"></div><span class="t" style="top:282.80px;font:bold 8.8px/11px 'DejaVu Sans Mono', 'Liberation Mono', monospace;color:#ffab1f;left:1377.00px;margin-left:-150px;width:300px;text-align:center;transform-origin:50% 50%;">77 %</span>
</div>
<div class="sec" id="ladder">
<div style="left:261.00px;top:341.00px;width:880.80px;height:377.50px;background:#24272c;"></div>
<span class="t" style="top:356.40px;font:bold 11.6px/14px 'Liberation Sans', sans-serif;color:#fff;left:276.60px;transform-origin:0 50%;transform:scaleX(0.990);">Ladder preview - avg entry: undefined ADA at $0.4252 / ADA</span>
<span class="t" style="top:356.40px;font:bold 11.6px/14px 'Liberation Sans', sans-serif;color:#dcdcdc;left:826.20px;width:300px;text-align:right;transform-origin:100% 50%;transform:scaleX(0.964);">LIQ price @ $0.2835</span>
<div style="left:608.10px;top:383.90px;width:186.80px;height:25.80px;background:#ffc600;border-radius:3px;"></div>
<span class="t" style="top:390.10px;font:bold 10.2px/13px 'Liberation Sans', sans-serif;color:#1a1a1a;left:701.50px;margin-left:-150px;width:300px;text-align:center;transform-origin:50% 50%;transform:scaleX(0.920);">SET 15 ORDERS</span>
<div style="left:272.40px;top:422.70px;width:206.20px;height:63.00px;border-radius:4.5px;overflow:hidden;"><div class="a" style="left:0;top:0;bottom:0;width:1.46px;background:#191b1f"></div></div><svg class="a" style="left:272.40px;top:422.70px" width="206.2" height="63.0"><rect x="0.75" y="0.75" width="204.70" height="61.50" rx="4" fill="none" stroke="#15b2be" stroke-width="1.5"/></svg><div style="left:280.80px;top:422.20px;width:13.80px;height:3.00px;background:#24272c;"></div><span class="t" style="top:419.80px;font:bold 6.8px/8px 'Liberation Sans', sans-serif;color:#19dff5;left:285.30px;transform-origin:0 50%;">1</span><span class="t" style="top:440.60px;font:bold 14px/18px 'Liberation Sans', sans-serif;color:#0fe6ff;left:286.50px;transform-origin:0 50%;transform:scaleX(1.073);">0.4477 $</span><span class="t" style="top:457.40px;font:normal 10.8px/14px 'Liberation Sans', sans-serif;color:#19dff5;left:286.50px;transform-origin:0 50%;transform:scaleX(0.928);">12 ADA</span><svg class="a" style="left:435.70px;top:435.80px" width="24" height="24" viewBox="-12 -12 24 24"><circle r="9.25" fill="none" stroke="#6e6e6e" stroke-width="2.5"/><circle r="9.25" fill="none" stroke="#0fe6ff" stroke-width="2.5" stroke-dasharray="0.41 58.12" transform="rotate(-90)"/></svg><span class="t" style="top:461.40px;font:normal 9px/11px 'Liberation Sans', sans-serif;color:#c2c2c2;left:453.60px;margin-left:-150px;width:300px;text-align:center;transform-origin:50% 50%;transform:scaleX(0.974);">0.71 %</span>
<div style="left:489.80px;top:422.70px;width:206.20px;height:63.00px;border-radius:4.5px;overflow:hidden;"><div class="a" style="left:0;top:0;bottom:0;width:1.88px;background:#191b1f"></div></div><svg class="a" style="left:489.80px;top:422.70px" width="206.2" height="63.0"><rect x="0.75" y="0.75" width="204.70" height="61.50" rx="4" fill="none" stroke="#15b2be" stroke-width="1.5"/></svg><div style="left:498.20px;top:422.20px;width:13.80px;height:3.00px;background:#24272c;"></div><span class="t" style="top:419.80px;font:bold 6.8px/8px 'Liberation Sans', sans-serif;color:#19dff5;left:502.70px;transform-origin:0 50%;">2</span><div style="left:647.20px;top:422.20px;width:39.60px;height:3.20px;background:#24272c;"></div><div style="left:646.70px;top:422.80px;width:0.50px;height:1.40px;background:#b8403a;"></div><span class="t" style="top:416.90px;font:normal 9.2px/12px 'Liberation Sans', sans-serif;color:#d24545;left:383.20px;width:300px;text-align:right;transform-origin:100% 50%;transform:scaleX(0.935);">-0.2 % L</span><span class="t" style="top:440.60px;font:bold 14px/18px 'Liberation Sans', sans-serif;color:#0fe6ff;left:503.90px;transform-origin:0 50%;transform:scaleX(1.073);">0.4456 $</span><span class="t" style="top:457.40px;font:normal 10.8px/14px 'Liberation Sans', sans-serif;color:#19dff5;left:503.90px;transform-origin:0 50%;transform:scaleX(0.928);">15 ADA</span><svg class="a" style="left:653.10px;top:435.80px" width="24" height="24" viewBox="-12 -12 24 24"><circle r="9.25" fill="none" stroke="#6e6e6e" stroke-width="2.5"/><circle r="9.25" fill="none" stroke="#0fe6ff" stroke-width="2.5" stroke-dasharray="0.53 58.12" transform="rotate(-90)"/></svg><span class="t" style="top:461.40px;font:normal 9px/11px 'Liberation Sans', sans-serif;color:#c2c2c2;left:671.00px;margin-left:-150px;width:300px;text-align:center;transform-origin:50% 50%;transform:scaleX(0.974);">0.91 %</span>
<div style="left:707.20px;top:422.70px;width:206.20px;height:63.00px;border-radius:4.5px;overflow:hidden;"><div class="a" style="left:0;top:0;bottom:0;width:2.39px;background:#191b1f"></div></div><svg class="a" style="left:707.20px;top:422.70px" width="206.2" height="63.0"><rect x="0.75" y="0.75" width="204.70" height="61.50" rx="4" fill="none" stroke="#15b2be" stroke-width="1.5"/></svg><div style="left:715.60px;top:422.20px;width:13.80px;height:3.00px;background:#24272c;"></div><span class="t" style="top:419.80px;font:bold 6.8px/8px 'Liberation Sans', sans-serif;color:#19dff5;left:720.10px;transform-origin:0 50%;">3</span><div style="left:858.90px;top:422.20px;width:45.30px;height:3.20px;background:#24272c;"></div><div style="left:856.86px;top:422.80px;width:2.04px;height:1.40px;background:#b8403a;"></div><span class="t" style="top:416.90px;font:normal 9.2px/12px 'Liberation Sans', sans-serif;color:#d24545;left:600.60px;width:300px;text-align:right;transform-origin:100% 50%;transform:scaleX(0.959);">-0.39 % L</span><span class="t" style="top:440.60px;font:bold 14px/18px 'Liberation Sans', sans-serif;color:#0fe6ff;left:721.30px;transform-origin:0 50%;transform:scaleX(1.073);">0.4436 $</span><span class="t" style="top:457.40px;font:normal 10.8px/14px 'Liberation Sans', sans-serif;color:#19dff5;left:721.30px;transform-origin:0 50%;transform:scaleX(0.928);">20 ADA</span><svg class="a" style="left:870.50px;top:435.80px" width="24" height="24" viewBox="-12 -12 24 24"><circle r="9.25" fill="none" stroke="#6e6e6e" stroke-width="2.5"/><circle r="9.25" fill="none" stroke="#0fe6ff" stroke-width="2.5" stroke-dasharray="0.67 58.12" transform="rotate(-90)"/></svg><span class="t" style="top:461.40px;font:normal 9px/11px 'Liberation Sans', sans-serif;color:#c2c2c2;left:888.40px;margin-left:-150px;width:300px;text-align:center;transform-origin:50% 50%;transform:scaleX(0.974);">1.16 %</span>
<div style="left:924.60px;top:422.70px;width:206.20px;height:63.00px;border-radius:4.5px;overflow:hidden;"><div class="a" style="left:0;top:0;bottom:0;width:3.05px;background:#191b1f"></div></div><svg class="a" style="left:924.60px;top:422.70px" width="206.2" height="63.0"><rect x="0.75" y="0.75" width="204.70" height="61.50" rx="4" fill="none" stroke="#15b2be" stroke-width="1.5"/></svg><div style="left:933.00px;top:422.20px;width:13.80px;height:3.00px;background:#24272c;"></div><span class="t" style="top:419.80px;font:bold 6.8px/8px 'Liberation Sans', sans-serif;color:#19dff5;left:937.50px;transform-origin:0 50%;">4</span><div style="left:1076.30px;top:422.20px;width:45.30px;height:3.20px;background:#24272c;"></div><div style="left:1072.82px;top:422.80px;width:3.49px;height:1.40px;background:#b8403a;"></div><span class="t" style="top:416.90px;font:normal 9.2px/12px 'Liberation Sans', sans-serif;color:#d24545;left:818.00px;width:300px;text-align:right;transform-origin:100% 50%;transform:scaleX(0.959);">-0.56 % L</span><span class="t" style="top:440.60px;font:bold 14px/18px 'Liberation Sans', sans-serif;color:#0fe6ff;left:938.70px;transform-origin:0 50%;transform:scaleX(1.073);">0.4415 $</span><span class="t" style="top:457.40px;font:normal 10.8px/14px 'Liberation Sans', sans-serif;color:#19dff5;left:938.70px;transform-origin:0 50%;transform:scaleX(0.928);">26 ADA</span><svg class="a" style="left:1087.90px;top:435.80px" width="24" height="24" viewBox="-12 -12 24 24"><circle r="9.25" fill="none" stroke="#6e6e6e" stroke-width="2.5"/><circle r="9.25" fill="none" stroke="#0fe6ff" stroke-width="2.5" stroke-dasharray="0.86 58.12" transform="rotate(-90)"/></svg><span class="t" style="top:461.40px;font:normal 9px/11px 'Liberation Sans', sans-serif;color:#c2c2c2;left:1105.80px;margin-left:-150px;width:300px;text-align:center;transform-origin:50% 50%;transform:scaleX(0.974);">1.48 %</span>
<div style="left:272.40px;top:496.70px;width:206.20px;height:63.00px;border-radius:4.5px;overflow:hidden;"><div class="a" style="left:0;top:0;bottom:0;width:3.92px;background:#191b1f"></div></div><svg class="a" style="left:272.40px;top:496.70px" width="206.2" height="63.0"><rect x="0.75" y="0.75" width="204.70" height="61.50" rx="4" fill="none" stroke="#15b2be" stroke-width="1.5"/></svg><div style="left:280.80px;top:496.20px;width:13.80px;height:3.00px;background:#24272c;"></div><span class="t" style="top:493.80px;font:bold 6.8px/8px 'Liberation Sans', sans-serif;color:#19dff5;left:285.30px;transform-origin:0 50%;">5</span><div style="left:424.10px;top:496.20px;width:45.30px;height:3.20px;background:#24272c;"></div><div style="left:419.34px;top:496.80px;width:4.76px;height:1.40px;background:#b8403a;"></div><span class="t" style="top:490.90px;font:normal 9.2px/12px 'Liberation Sans', sans-serif;color:#d24545;left:165.80px;width:300px;text-align:right;transform-origin:100% 50%;transform:scaleX(0.959);">-0.71 % L</span><span class="t" style="top:514.60px;font:bold 14px/18px 'Liberation Sans', sans-serif;color:#0fe6ff;left:286.50px;transform-origin:0 50%;transform:scaleX(1.073);">0.4394 $</span><span class="t" style="top:531.40px;font:normal 10.8px/14px 'Liberation Sans', sans-serif;color:#19dff5;left:286.50px;transform-origin:0 50%;transform:scaleX(0.928);">33 ADA</span><svg class="a" style="left:435.70px;top:509.80px" width="24" height="24" viewBox="-12 -12 24 24"><circle r="9.25" fill="none" stroke="#6e6e6e" stroke-width="2.5"/><circle r="9.25" fill="none" stroke="#0fe6ff" stroke-width="2.5" stroke-dasharray="1.10 58.12" transform="rotate(-90)"/></svg><span class="t" style="top:535.40px;font:normal 9px/11px 'Liberation Sans', sans-serif;color:#c2c2c2;left:453.60px;margin-left:-150px;width:300px;text-align:center;transform-origin:50% 50%;transform:scaleX(0.978);">1.9 %</span>
<div style="left:489.80px;top:496.70px;width:206.20px;height:63.00px;border-radius:4.5px;overflow:hidden;"><div class="a" style="left:0;top:0;bottom:0;width:5.01px;background:#191b1f"></div></div><svg class="a" style="left:489.80px;top:496.70px" width="206.2" height="63.0"><rect x="0.75" y="0.75" width="204.70" height="61.50" rx="4" fill="none" stroke="#15b2be" stroke-width="1.5"/></svg><div style="left:498.20px;top:496.20px;width:13.80px;height:3.00px;background:#24272c;"></div><span class="t" style="top:493.80px;font:bold 6.8px/8px 'Liberation Sans', sans-serif;color:#19dff5;left:502.70px;transform-origin:0 50%;">6</span><div style="left:641.50px;top:496.20px;width:45.30px;height:3.20px;background:#24272c;"></div><div style="left:635.63px;top:496.80px;width:5.86px;height:1.40px;background:#b8403a;"></div><span class="t" style="top:490.90px;font:normal 9.2px/12px 'Liberation Sans', sans-serif;color:#d24545;left:383.20px;width:300px;text-align:right;transform-origin:100% 50%;transform:scaleX(0.959);">-0.84 % L</span><span class="t" style="top:514.60px;font:bold 14px/18px 'Liberation Sans', sans-serif;color:#0fe6ff;left:503.90px;transform-origin:0 50%;transform:scaleX(1.073);">0.4373 $</span><span class="t" style="top:531.40px;font:normal 10.8px/14px 'Liberation Sans', sans-serif;color:#19dff5;left:503.90px;transform-origin:0 50%;transform:scaleX(0.928);">42 ADA</span><svg class="a" style="left:653.10px;top:509.80px" width="24" height="24" viewBox="-12 -12 24 24"><circle r="9.25" fill="none" stroke="#6e6e6e" stroke-width="2.5"/><circle r="9.25" fill="none" stroke="#0fe6ff" stroke-width="2.5" stroke-dasharray="1.41 58.12" transform="rotate(-90)"/></svg><span class="t" style="top:535.40px;font:normal 9px/11px 'Liberation Sans', sans-serif;color:#c2c2c2;left:671.00px;margin-left:-150px;width:300px;text-align:center;transform-origin:50% 50%;transform:scaleX(0.974);">2.43 %</span>
<div style="left:707.20px;top:496.70px;width:206.20px;height:63.00px;border-radius:4.5px;overflow:hidden;"><div class="a" style="left:0;top:0;bottom:0;width:6.41px;background:#191b1f"></div></div><svg class="a" style="left:707.20px;top:496.70px" width="206.2" height="63.0"><rect x="0.75" y="0.75" width="204.70" height="61.50" rx="4" fill="none" stroke="#15b2be" stroke-width="1.5"/></svg><div style="left:715.60px;top:496.20px;width:13.80px;height:3.00px;background:#24272c;"></div><span class="t" style="top:493.80px;font:bold 6.8px/8px 'Liberation Sans', sans-serif;color:#19dff5;left:720.10px;transform-origin:0 50%;">7</span><div style="left:858.90px;top:496.20px;width:45.30px;height:3.20px;background:#24272c;"></div><div style="left:852.02px;top:496.80px;width:6.88px;height:1.40px;background:#b8403a;"></div><span class="t" style="top:490.90px;font:normal 9.2px/12px 'Liberation Sans', sans-serif;color:#d24545;left:600.60px;width:300px;text-align:right;transform-origin:100% 50%;transform:scaleX(0.959);">-0.96 % L</span><span class="t" style="top:514.60px;font:bold 14px/18px 'Liberation Sans', sans-serif;color:#0fe6ff;left:721.30px;transform-origin:0 50%;transform:scaleX(1.073);">0.4353 $</span><span class="t" style="top:531.40px;font:normal 10.8px/14px 'Liberation Sans', sans-serif;color:#19dff5;left:721.30px;transform-origin:0 50%;transform:scaleX(0.928);">54 ADA</span><svg class="a" style="left:870.50px;top:509.80px" width="24" height="24" viewBox="-12 -12 24 24"><circle r="9.25" fill="none" stroke="#6e6e6e" stroke-width="2.5"/><circle r="9.25" fill="none" stroke="#0fe6ff" stroke-width="2.5" stroke-dasharray="1.81 58.12" transform="rotate(-90)"/></svg><span class="t" style="top:535.40px;font:normal 9px/11px 'Liberation Sans', sans-serif;color:#c2c2c2;left:888.40px;margin-left:-150px;width:300px;text-align:center;transform-origin:50% 50%;transform:scaleX(0.998);">3.11 %</span>
<div style="left:924.60px;top:496.70px;width:206.20px;height:63.00px;border-radius:4.5px;overflow:hidden;"><div class="a" style="left:0;top:0;bottom:0;width:8.21px;background:#191b1f"></div></div><svg class="a" style="left:924.60px;top:496.70px" width="206.2" height="63.0"><rect x="0.75" y="0.75" width="204.70" height="61.50" rx="4" fill="none" stroke="#15b2be" stroke-width="1.5"/></svg><div style="left:933.00px;top:496.20px;width:13.80px;height:3.00px;background:#24272c;"></div><span class="t" style="top:493.80px;font:bold 6.8px/8px 'Liberation Sans', sans-serif;color:#19dff5;left:937.50px;transform-origin:0 50%;">8</span><div style="left:1076.30px;top:496.20px;width:45.30px;height:3.20px;background:#24272c;"></div><div style="left:1068.48px;top:496.80px;width:7.82px;height:1.40px;background:#b8403a;"></div><span class="t" style="top:490.90px;font:normal 9.2px/12px 'Liberation Sans', sans-serif;color:#d24545;left:818.00px;width:300px;text-align:right;transform-origin:100% 50%;transform:scaleX(0.959);">-1.07 % L</span><span class="t" style="top:514.60px;font:bold 14px/18px 'Liberation Sans', sans-serif;color:#0fe6ff;left:938.70px;transform-origin:0 50%;transform:scaleX(1.073);">0.4332 $</span><span class="t" style="top:531.40px;font:normal 10.8px/14px 'Liberation Sans', sans-serif;color:#19dff5;left:938.70px;transform-origin:0 50%;transform:scaleX(0.928);">70 ADA</span><svg class="a" style="left:1087.90px;top:509.80px" width="24" height="24" viewBox="-12 -12 24 24"><circle r="9.25" fill="none" stroke="#6e6e6e" stroke-width="2.5"/><circle r="9.25" fill="none" stroke="#0fe6ff" stroke-width="2.5" stroke-dasharray="2.31 58.12" transform="rotate(-90)"/></svg><span class="t" style="top:535.40px;font:normal 9px/11px 'Liberation Sans', sans-serif;color:#c2c2c2;left:1105.80px;margin-left:-150px;width:300px;text-align:center;transform-origin:50% 50%;transform:scaleX(0.974);">3.98 %</span>
<div style="left:272.40px;top:570.70px;width:206.20px;height:63.00px;border-radius:4.5px;overflow:hidden;"><div class="a" style="left:0;top:0;bottom:0;width:10.52px;background:#191b1f"></div></div><svg class="a" style="left:272.40px;top:570.70px" width="206.2" height="63.0"><rect x="0.75" y="0.75" width="204.70" height="61.50" rx="4" fill="none" stroke="#15b2be" stroke-width="1.5"/></svg><div style="left:280.80px;top:570.20px;width:13.80px;height:3.00px;background:#24272c;"></div><div style="left:280.80px;top:570.20px;width:2.12px;height:7.80px;background:#1f2226;"></div><span class="t" style="top:567.80px;font:bold 6.8px/8px 'Liberation Sans', sans-serif;color:#19dff5;left:285.30px;transform-origin:0 50%;">9</span><div style="left:424.10px;top:570.20px;width:45.30px;height:3.20px;background:#24272c;"></div><div style="left:415.51px;top:570.80px;width:8.59px;height:1.40px;background:#b8403a;"></div><span class="t" style="top:564.90px;font:normal 9.2px/12px 'Liberation Sans', sans-serif;color:#d24545;left:165.80px;width:300px;text-align:right;transform-origin:100% 50%;transform:scaleX(0.959);">-1.16 % L</span><span class="t" style="top:588.60px;font:bold 14px/18px 'Liberation Sans', sans-serif;color:#0fe6ff;left:286.50px;transform-origin:0 50%;transform:scaleX(1.089);">0.4311 $</span><span class="t" style="top:605.40px;font:normal 10.8px/14px 'Liberation Sans', sans-serif;color:#19dff5;left:286.50px;transform-origin:0 50%;transform:scaleX(0.928);">90 ADA</span><svg class="a" style="left:435.70px;top:583.80px" width="24" height="24" viewBox="-12 -12 24 24"><circle r="9.25" fill="none" stroke="#6e6e6e" stroke-width="2.5"/><circle r="9.25" fill="none" stroke="#0fe6ff" stroke-width="2.5" stroke-dasharray="2.96 58.12" transform="rotate(-90)"/></svg><span class="t" style="top:609.40px;font:normal 9px/11px 'Liberation Sans', sans-serif;color:#c2c2c2;left:453.60px;margin-left:-150px;width:300px;text-align:center;transform-origin:50% 50%;transform:scaleX(0.978);">5.1 %</span>
<div style="left:489.80px;top:570.70px;width:206.20px;height:63.00px;border-radius:4.5px;overflow:hidden;"><div class="a" style="left:0;top:0;bottom:0;width:13.46px;background:#191b1f"></div></div><svg class="a" style="left:489.80px;top:570.70px" width="206.2" height="63.0"><rect x="0.75" y="0.75" width="204.70" height="61.50" rx="4" fill="none" stroke="#15b2be" stroke-width="1.5"/></svg><div style="left:498.20px;top:570.20px;width:18.10px;height:3.00px;background:#24272c;"></div><div style="left:498.20px;top:570.20px;width:5.06px;height:7.80px;background:#1f2226;"></div><span class="t" style="top:567.80px;font:bold 6.8px/8px 'Liberation Sans', sans-serif;color:#19dff5;left:502.70px;transform-origin:0 50%;">10</span><div style="left:641.50px;top:570.20px;width:45.30px;height:3.20px;background:#24272c;"></div><div style="left:632.15px;top:570.80px;width:9.35px;height:1.40px;background:#b8403a;"></div><span class="t" style="top:564.90px;font:normal 9.2px/12px 'Liberation Sans', sans-serif;color:#d24545;left:383.20px;width:300px;text-align:right;transform-origin:100% 50%;transform:scaleX(0.959);">-1.25 % L</span><span class="t" style="top:588.60px;font:bold 14px/18px 'Liberation Sans', sans-serif;color:#0fe6ff;left:503.90px;transform-origin:0 50%;transform:scaleX(1.073);">0.4291 $</span><span class="t" style="top:605.40px;font:normal 10.8px/14px 'Liberation Sans', sans-serif;color:#19dff5;left:503.90px;transform-origin:0 50%;transform:scaleX(0.949);">115 ADA</span><svg class="a" style="left:653.10px;top:583.80px" width="24" height="24" viewBox="-12 -12 24 24"><circle r="9.25" fill="none" stroke="#6e6e6e" stroke-width="2.5"/><circle r="9.25" fill="none" stroke="#0fe6ff" stroke-width="2.5" stroke-dasharray="3.80 58.12" transform="rotate(-90)"/></svg><span class="t" style="top:609.40px;font:normal 9px/11px 'Liberation Sans', sans-serif;color:#c2c2c2;left:671.00px;margin-left:-150px;width:300px;text-align:center;transform-origin:50% 50%;transform:scaleX(0.974);">6.53 %</span>
<div style="left:707.20px;top:570.70px;width:206.20px;height:63.00px;border-radius:4.5px;overflow:hidden;"><div class="a" style="left:0;top:0;bottom:0;width:17.24px;background:#191b1f"></div></div><svg class="a" style="left:707.20px;top:570.70px" width="206.2" height="63.0"><rect x="0.75" y="0.75" width="204.70" height="61.50" rx="4" fill="none" stroke="#15b2be" stroke-width="1.5"/></svg><div style="left:715.60px;top:570.20px;width:18.10px;height:3.00px;background:#24272c;"></div><div style="left:715.60px;top:570.20px;width:8.84px;height:7.80px;background:#1f2226;"></div><span class="t" style="top:567.80px;font:bold 6.8px/8px 'Liberation Sans', sans-serif;color:#19dff5;left:720.10px;transform-origin:0 50%;">11</span><div style="left:858.90px;top:570.20px;width:45.30px;height:3.20px;background:#24272c;"></div><div style="left:848.96px;top:570.80px;width:9.95px;height:1.40px;background:#b8403a;"></div><span class="t" style="top:564.90px;font:normal 9.2px/12px 'Liberation Sans', sans-serif;color:#d24545;left:600.60px;width:300px;text-align:right;transform-origin:100% 50%;transform:scaleX(0.959);">-1.32 % L</span><span class="t" style="top:588.60px;font:bold 14px/18px 'Liberation Sans', sans-serif;color:#0fe6ff;left:721.30px;transform-origin:0 50%;transform:scaleX(1.084);">0.427 $</span><span class="t" style="top:605.40px;font:normal 10.8px/14px 'Liberation Sans', sans-serif;color:#19dff5;left:721.30px;transform-origin:0 50%;transform:scaleX(0.931);">149 ADA</span><svg class="a" style="left:870.50px;top:583.80px" width="24" height="24" viewBox="-12 -12 24 24"><circle r="9.25" fill="none" stroke="#6e6e6e" stroke-width="2.5"/><circle r="9.25" fill="none" stroke="#0fe6ff" stroke-width="2.5" stroke-dasharray="4.86 58.12" transform="rotate(-90)"/></svg><span class="t" style="top:609.40px;font:normal 9px/11px 'Liberation Sans', sans-serif;color:#c2c2c2;left:888.40px;margin-left:-150px;width:300px;text-align:center;transform-origin:50% 50%;transform:scaleX(0.974);">8.36 %</span>
<div style="left:924.60px;top:570.70px;width:206.20px;height:63.00px;border-radius:4.5px;overflow:hidden;"><div class="a" style="left:0;top:0;bottom:0;width:22.04px;background:#191b1f"></div></div><svg class="a" style="left:924.60px;top:570.70px" width="206.2" height="63.0"><rect x="0.75" y="0.75" width="204.70" height="61.50" rx="4" fill="none" stroke="#15b2be" stroke-width="1.5"/></svg><div style="left:933.00px;top:570.20px;width:18.10px;height:3.00px;background:#24272c;"></div><div style="left:933.00px;top:570.20px;width:13.64px;height:7.80px;background:#1f2226;"></div><span class="t" style="top:567.80px;font:bold 6.8px/8px 'Liberation Sans', sans-serif;color:#19dff5;left:937.50px;transform-origin:0 50%;">12</span><div style="left:1076.30px;top:570.20px;width:45.30px;height:3.20px;background:#24272c;"></div><div style="left:1065.85px;top:570.80px;width:10.46px;height:1.40px;background:#b8403a;"></div><span class="t" style="top:564.90px;font:normal 9.2px/12px 'Liberation Sans', sans-serif;color:#d24545;left:818.00px;width:300px;text-align:right;transform-origin:100% 50%;transform:scaleX(0.959);">-1.38 % L</span><span class="t" style="top:588.60px;font:bold 14px/18px 'Liberation Sans', sans-serif;color:#0fe6ff;left:938.70px;transform-origin:0 50%;transform:scaleX(1.073);">0.4249 $</span><span class="t" style="top:605.40px;font:normal 10.8px/14px 'Liberation Sans', sans-serif;color:#19dff5;left:938.70px;transform-origin:0 50%;transform:scaleX(0.931);">191 ADA</span><svg class="a" style="left:1087.90px;top:583.80px" width="24" height="24" viewBox="-12 -12 24 24"><circle r="9.25" fill="none" stroke="#6e6e6e" stroke-width="2.5"/><circle r="9.25" fill="none" stroke="#0fe6ff" stroke-width="2.5" stroke-dasharray="6.21 58.12" transform="rotate(-90)"/></svg><span class="t" style="top:609.40px;font:normal 9px/11px 'Liberation Sans', sans-serif;color:#c2c2c2;left:1105.80px;margin-left:-150px;width:300px;text-align:center;transform-origin:50% 50%;transform:scaleX(0.972);">10.69 %</span>
<div style="left:272.40px;top:644.70px;width:206.20px;height:63.00px;border-radius:4.5px;overflow:hidden;"><div class="a" style="left:0;top:0;bottom:0;width:28.23px;background:#191b1f"></div></div><svg class="a" style="left:272.40px;top:644.70px" width="206.2" height="63.0"><rect x="0.75" y="0.75" width="204.70" height="61.50" rx="4" fill="none" stroke="#15b2be" stroke-width="1.5"/></svg><div style="left:280.80px;top:644.20px;width:18.10px;height:3.00px;background:#24272c;"></div><div style="left:280.80px;top:644.20px;width:18.10px;height:7.80px;background:#1f2226;"></div><span class="t" style="top:641.80px;font:bold 6.8px/8px 'Liberation Sans', sans-serif;color:#19dff5;left:285.30px;transform-origin:0 50%;">13</span><div style="left:424.10px;top:644.20px;width:45.30px;height:3.20px;background:#24272c;"></div><div style="left:413.13px;top:644.80px;width:10.96px;height:1.40px;background:#b8403a;"></div><span class="t" style="top:638.90px;font:normal 9.2px/12px 'Liberation Sans', sans-serif;color:#d24545;left:165.80px;width:300px;text-align:right;transform-origin:100% 50%;transform:scaleX(0.959);">-1.44 % L</span><span class="t" style="top:662.60px;font:bold 14px/18px 'Liberation Sans', sans-serif;color:#0fe6ff;left:286.50px;transform-origin:0 50%;transform:scaleX(1.073);">0.4228 $</span><span class="t" style="top:679.40px;font:normal 10.8px/14px 'Liberation Sans', sans-serif;color:#19dff5;left:286.50px;transform-origin:0 50%;transform:scaleX(0.931);">246 ADA</span><svg class="a" style="left:435.70px;top:657.80px" width="24" height="24" viewBox="-12 -12 24 24"><circle r="9.25" fill="none" stroke="#6e6e6e" stroke-width="2.5"/><circle r="9.25" fill="none" stroke="#0fe6ff" stroke-width="2.5" stroke-dasharray="7.96 58.12" transform="rotate(-90)"/></svg><span class="t" style="top:683.40px;font:normal 9px/11px 'Liberation Sans', sans-serif;color:#c2c2c2;left:453.60px;margin-left:-150px;width:300px;text-align:center;transform-origin:50% 50%;transform:scaleX(0.972);">13.69 %</span>
<div style="left:489.80px;top:644.70px;width:206.20px;height:63.00px;border-radius:4.5px;overflow:hidden;"><div class="a" style="left:0;top:0;bottom:0;width:36.13px;background:#191b1f"></div></div><svg class="a" style="left:489.80px;top:644.70px" width="206.2" height="63.0"><rect x="0.75" y="0.75" width="204.70" height="61.50" rx="4" fill="none" stroke="#15b2be" stroke-width="1.5"/></svg><div style="left:498.20px;top:644.20px;width:18.10px;height:3.00px;background:#24272c;"></div><div style="left:498.20px;top:644.20px;width:18.10px;height:7.80px;background:#1f2226;"></div><span class="t" style="top:641.80px;font:bold 6.8px/8px 'Liberation Sans', sans-serif;color:#19dff5;left:502.70px;transform-origin:0 50%;">14</span><div style="left:641.50px;top:644.20px;width:45.30px;height:3.20px;background:#24272c;"></div><div style="left:630.11px;top:644.80px;width:11.39px;height:1.40px;background:#b8403a;"></div><span class="t" style="top:638.90px;font:normal 9.2px/12px 'Liberation Sans', sans-serif;color:#d24545;left:383.20px;width:300px;text-align:right;transform-origin:100% 50%;transform:scaleX(0.959);">-1.49 % L</span><span class="t" style="top:662.60px;font:bold 14px/18px 'Liberation Sans', sans-serif;color:#0fe6ff;left:503.90px;transform-origin:0 50%;transform:scaleX(1.073);">0.4208 $</span><span class="t" style="top:679.40px;font:normal 10.8px/14px 'Liberation Sans', sans-serif;color:#19dff5;left:503.90px;transform-origin:0 50%;transform:scaleX(0.931);">316 ADA</span><svg class="a" style="left:653.10px;top:657.80px" width="24" height="24" viewBox="-12 -12 24 24"><circle r="9.25" fill="none" stroke="#6e6e6e" stroke-width="2.5"/><circle r="9.25" fill="none" stroke="#0fe6ff" stroke-width="2.5" stroke-dasharray="10.18 58.12" transform="rotate(-90)"/></svg><span class="t" style="top:683.40px;font:normal 9px/11px 'Liberation Sans', sans-serif;color:#c2c2c2;left:671.00px;margin-left:-150px;width:300px;text-align:center;transform-origin:50% 50%;transform:scaleX(0.972);">17.52 %</span>
<div style="left:707.20px;top:644.70px;width:206.20px;height:63.00px;border-radius:4.5px;overflow:hidden;"><div class="a" style="left:0;top:0;bottom:0;width:46.25px;background:#191b1f"></div></div><svg class="a" style="left:707.20px;top:644.70px" width="206.2" height="63.0"><rect x="0.75" y="0.75" width="204.70" height="61.50" rx="4" fill="none" stroke="#15b2be" stroke-width="1.5"/></svg><div style="left:715.60px;top:644.20px;width:18.10px;height:3.00px;background:#24272c;"></div><div style="left:715.60px;top:644.20px;width:18.10px;height:7.80px;background:#1f2226;"></div><span class="t" style="top:641.80px;font:bold 6.8px/8px 'Liberation Sans', sans-serif;color:#19dff5;left:720.10px;transform-origin:0 50%;">15</span><div style="left:858.90px;top:644.20px;width:45.30px;height:3.20px;background:#24272c;"></div><div style="left:847.17px;top:644.80px;width:11.73px;height:1.40px;background:#b8403a;"></div><span class="t" style="top:638.90px;font:normal 9.2px/12px 'Liberation Sans', sans-serif;color:#d24545;left:600.60px;width:300px;text-align:right;transform-origin:100% 50%;transform:scaleX(0.959);">-1.53 % L</span><span class="t" style="top:662.60px;font:bold 14px/18px 'Liberation Sans', sans-serif;color:#0fe6ff;left:721.30px;transform-origin:0 50%;transform:scaleX(1.073);">0.4187 $</span><span class="t" style="top:679.40px;font:normal 10.8px/14px 'Liberation Sans', sans-serif;color:#19dff5;left:721.30px;transform-origin:0 50%;transform:scaleX(0.931);">407 ADA</span><svg class="a" style="left:870.50px;top:657.80px" width="24" height="24" viewBox="-12 -12 24 24"><circle r="9.25" fill="none" stroke="#6e6e6e" stroke-width="2.5"/><circle r="9.25" fill="none" stroke="#0fe6ff" stroke-width="2.5" stroke-dasharray="13.04 58.12" transform="rotate(-90)"/></svg><span class="t" style="top:683.40px;font:normal 9px/11px 'Liberation Sans', sans-serif;color:#c2c2c2;left:888.40px;margin-left:-150px;width:300px;text-align:center;transform-origin:50% 50%;transform:scaleX(0.972);">22.43 %</span>
</div>
<div class="sec" id="orders">
<div style="left:1153.20px;top:341.20px;width:322.00px;height:33.80px;background:#ffc600;border:1px solid #3f8a6a;border-radius:3.5px;box-sizing:border-box;"></div>
<span class="t" style="top:350.30px;font:normal 12.8px/16px 'DejaVu Sans Mono', 'Liberation Mono', monospace;color:#111;left:1314.30px;margin-left:-150px;width:300px;text-align:center;transform-origin:50% 50%;-webkit-text-stroke:0.35px #111;">Cancel all orders</span>
<div style="left:1153.20px;top:380.00px;width:322.00px;height:315.50px;background:#24272c;"></div>
<span class="t" style="top:395.60px;font:bold 11.2px/14px 'Liberation Sans', sans-serif;color:#fff;left:1168.40px;transform-origin:0 50%;transform:scaleX(0.982);">Buy orders</span>
<span class="t" style="top:395.60px;font:bold 11.2px/14px 'Liberation Sans', sans-serif;color:#fff;left:1332.70px;transform-origin:0 50%;transform:scaleX(0.986);">Sell orders</span>
<div style="left:1161.00px;top:423.20px;width:148.50px;height:26.00px;background:#ffc600;border-radius:3px;"></div>
<span class="t" style="top:429.90px;font:bold 10px/12px 'Liberation Sans', sans-serif;color:#222;left:1235.20px;margin-left:-150px;width:300px;text-align:center;transform-origin:50% 50%;transform:scaleX(0.928);">CANCEL 4 BUY ORDERS</span>
<div style="left:1325.40px;top:423.20px;width:141.70px;height:26.00px;background:#ffc600;border-radius:3px;"></div>
<span class="t" style="top:429.90px;font:bold 10px/12px 'Liberation Sans', sans-serif;color:#222;left:1396.20px;margin-left:-150px;width:300px;text-align:center;transform-origin:50% 50%;transform:scaleX(0.919);">CANCEL 4 SELL ORDERS</span>
<span class="t" style="top:458.40px;font:normal 11.2px/14px 'Liberation Sans', sans-serif;color:#fff;left:1161.00px;transform-origin:0 50%;transform:scaleX(1.046);">9442 ADA at $0.45 (avg)</span>
<span class="t" style="top:458.40px;font:normal 11.2px/14px 'Liberation Sans', sans-serif;color:#fff;left:1325.40px;transform-origin:0 50%;transform:scaleX(1.046);">623 ADA at $0.509 (avg)</span>
<div style="left:1161.00px;top:477.60px;width:148.20px;height:210.00px;background:#03465b;border-radius:3.5px;"></div><span class="t" style="top:492.20px;font:normal 11.2px/14px 'Liberation Sans', sans-serif;color:#fff;left:1173.30px;transform-origin:0 50%;-webkit-text-stroke:0.4px #fff;transform:scaleX(1.000);">Price</span><span class="t" style="top:492.20px;font:normal 11.2px/14px 'Liberation Sans', sans-serif;color:#fff;left:1243.50px;transform-origin:0 50%;-webkit-text-stroke:0.4px #fff;transform:scaleX(1.076);">Amount</span><svg class="a" style="left:1161.00px;top:519.20px" width="148.20" height="4"><rect x="0" y="1.35" width="148.20" height="1.5" fill="#a3bcc4"/></svg><span class="t" style="top:534.90px;font:normal 11.2px/14px 'Liberation Sans', sans-serif;color:#fff;left:1173.30px;transform-origin:0 50%;-webkit-text-stroke:0.25px currentColor;transform:scaleX(1.044);">0.4752 $</span><span class="t" style="top:534.90px;font:normal 11.2px/14px 'Liberation Sans', sans-serif;color:#fff;left:1243.50px;transform-origin:0 50%;-webkit-text-stroke:0.25px currentColor;transform:scaleX(1.065);">818 ADA</span><svg class="a" style="left:1161.00px;top:561.00px" width="148.20" height="4"><rect x="0" y="1.35" width="148.20" height="1.5" fill="#a3bcc4"/></svg><span class="t" style="top:576.60px;font:normal 11.2px/14px 'Liberation Sans', sans-serif;color:#fff;left:1173.30px;transform-origin:0 50%;-webkit-text-stroke:0.25px currentColor;transform:scaleX(1.044);">0.4667 $</span><span class="t" style="top:576.60px;font:normal 11.2px/14px 'Liberation Sans', sans-serif;color:#fff;left:1243.50px;transform-origin:0 50%;-webkit-text-stroke:0.25px currentColor;transform:scaleX(1.060);">1249 ADA</span><svg class="a" style="left:1161.00px;top:602.80px" width="148.20" height="4"><rect x="0" y="1.35" width="148.20" height="1.5" fill="#a3bcc4"/></svg><span class="t" style="top:618.30px;font:normal 11.2px/14px 'Liberation Sans', sans-serif;color:#fff;left:1173.30px;transform-origin:0 50%;-webkit-text-stroke:0.25px currentColor;transform:scaleX(1.044);">0.4498 $</span><span class="t" style="top:618.30px;font:normal 11.2px/14px 'Liberation Sans', sans-serif;color:#fff;left:1243.50px;transform-origin:0 50%;-webkit-text-stroke:0.25px currentColor;transform:scaleX(1.060);">2917 ADA</span><svg class="a" style="left:1161.00px;top:644.60px" width="148.20" height="4"><rect x="0" y="1.35" width="148.20" height="1.5" fill="#a3bcc4"/></svg><span class="t" style="top:660.00px;font:normal 11.2px/14px 'Liberation Sans', sans-serif;color:#fff;left:1173.30px;transform-origin:0 50%;-webkit-text-stroke:0.25px currentColor;transform:scaleX(1.044);">0.4414 $</span><span class="t" style="top:660.00px;font:normal 11.2px/14px 'Liberation Sans', sans-serif;color:#fff;left:1243.50px;transform-origin:0 50%;-webkit-text-stroke:0.25px currentColor;transform:scaleX(1.060);">4458 ADA</span>
<div style="left:1325.40px;top:477.60px;width:141.70px;height:210.00px;background:#03465b;border-radius:3.5px;"></div><span class="t" style="top:492.20px;font:normal 11.2px/14px 'Liberation Sans', sans-serif;color:#fff;left:1337.60px;transform-origin:0 50%;-webkit-text-stroke:0.4px #fff;transform:scaleX(1.000);">Price</span><span class="t" style="top:492.20px;font:normal 11.2px/14px 'Liberation Sans', sans-serif;color:#fff;left:1408.30px;transform-origin:0 50%;-webkit-text-stroke:0.4px #fff;transform:scaleX(1.076);">Amount</span><svg class="a" style="left:1325.40px;top:519.20px" width="141.70" height="4"><rect x="0" y="1.35" width="141.70" height="1.5" fill="#a3bcc4"/></svg><span class="t" style="top:534.90px;font:normal 11.2px/14px 'Liberation Sans', sans-serif;color:#fff;left:1337.60px;transform-origin:0 50%;-webkit-text-stroke:0.25px currentColor;transform:scaleX(1.044);">0.5037 $</span><span class="t" style="top:534.90px;font:normal 11.2px/14px 'Liberation Sans', sans-serif;color:#fff;left:1408.30px;transform-origin:0 50%;-webkit-text-stroke:0.25px currentColor;transform:scaleX(1.065);">134 ADA</span><svg class="a" style="left:1325.40px;top:561.00px" width="141.70" height="4"><rect x="0" y="1.35" width="141.70" height="1.5" fill="#a3bcc4"/></svg><span class="t" style="top:576.60px;font:normal 11.2px/14px 'Liberation Sans', sans-serif;color:#fff;left:1337.60px;transform-origin:0 50%;-webkit-text-stroke:0.25px currentColor;transform:scaleX(1.053);">0.507 $</span><span class="t" style="top:576.60px;font:normal 11.2px/14px 'Liberation Sans', sans-serif;color:#fff;left:1408.30px;transform-origin:0 50%;-webkit-text-stroke:0.25px currentColor;transform:scaleX(1.065);">148 ADA</span><svg class="a" style="left:1325.40px;top:602.80px" width="141.70" height="4"><rect x="0" y="1.35" width="141.70" height="1.5" fill="#a3bcc4"/></svg><span class="t" style="top:618.30px;font:normal 11.2px/14px 'Liberation Sans', sans-serif;color:#fff;left:1337.60px;transform-origin:0 50%;-webkit-text-stroke:0.25px currentColor;transform:scaleX(1.044);">0.5103 $</span><span class="t" style="top:618.30px;font:normal 11.2px/14px 'Liberation Sans', sans-serif;color:#fff;left:1408.30px;transform-origin:0 50%;-webkit-text-stroke:0.25px currentColor;transform:scaleX(1.065);">162 ADA</span><svg class="a" style="left:1325.40px;top:644.60px" width="141.70" height="4"><rect x="0" y="1.35" width="141.70" height="1.5" fill="#a3bcc4"/></svg><span class="t" style="top:660.00px;font:normal 11.2px/14px 'Liberation Sans', sans-serif;color:#fff;left:1337.60px;transform-origin:0 50%;-webkit-text-stroke:0.25px currentColor;transform:scaleX(1.044);">0.5136 $</span><span class="t" style="top:660.00px;font:normal 11.2px/14px 'Liberation Sans', sans-serif;color:#fff;left:1408.30px;transform-origin:0 50%;-webkit-text-stroke:0.25px currentColor;transform:scaleX(1.065);">179 ADA</span>
</div>
</body></html>
